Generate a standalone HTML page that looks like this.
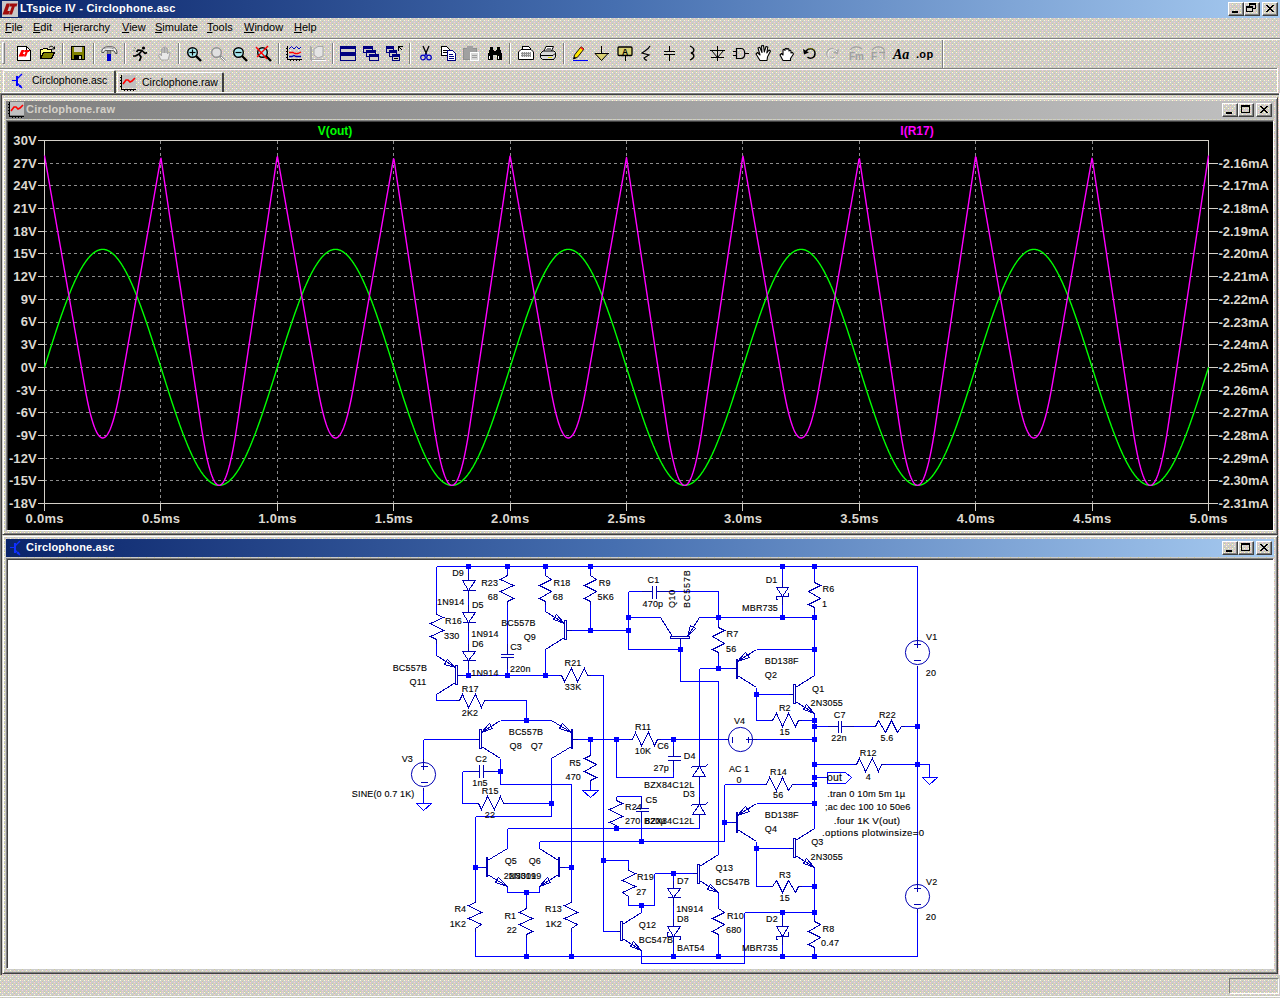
<!DOCTYPE html><html><head><meta charset="utf-8"><title>LTspice IV - Circlophone.asc</title><style>

html,body{margin:0;padding:0;}
body{width:1280px;height:998px;overflow:hidden;background:#d4d0c8;position:relative;
 font-family:"Liberation Sans",sans-serif;font-size:11px;color:#000;}
.abs{position:absolute;}
.t{position:absolute;white-space:nowrap;line-height:1;}
#title{left:0;top:0;width:1280px;height:18px;background:linear-gradient(to right,#0a246a 0%,#466fb0 48%,#a6caf0 100%);}
#title .cap{left:20px;top:3px;color:#fff;font-weight:bold;font-size:11px;letter-spacing:0.25px;}
.cbtn{position:absolute;width:16px;height:14px;background:transparent;box-sizing:border-box;
 border:1px solid;border-color:#fff #404040 #404040 #fff;box-shadow:inset -1px -1px 0 #808080;}
.menu{top:22px;font-size:11px;}
.menu u{text-decoration:underline;}
.hl{position:absolute;height:1px;left:0;width:1280px;}
.child{position:absolute;box-sizing:border-box;background:transparent;}
.ctitle{position:absolute;left:3px;top:3px;height:18px;}
.ctitle .cap{top:3px;font-weight:bold;font-size:11px;letter-spacing:0.2px;}
.tab{position:absolute;box-sizing:border-box;}
svg{position:absolute;overflow:visible;}
svg text{font-family:"Liberation Sans",sans-serif;}

</style></head><body>
<svg style="left:0;top:0" width="1280" height="998" shape-rendering="crispEdges"><defs><pattern id="dp" width="8" height="8" patternUnits="userSpaceOnUse"><rect width="8" height="8" fill="#cccccc"/><rect x="0" y="0" width="1" height="1" fill="#ffffcc"/><rect x="4" y="0" width="1" height="1" fill="#ffffcc"/><rect x="2" y="0" width="1" height="1" fill="#ffcccc"/><rect x="6" y="1" width="1" height="1" fill="#cccc99"/><rect x="2" y="2" width="1" height="1" fill="#ffffcc"/><rect x="6" y="2" width="1" height="1" fill="#ffcccc"/><rect x="0" y="3" width="1" height="1" fill="#cccc99"/><rect x="4" y="3" width="1" height="1" fill="#cccc99"/><rect x="0" y="4" width="1" height="1" fill="#ffffcc"/><rect x="4" y="4" width="1" height="1" fill="#ffffcc"/><rect x="6" y="4" width="1" height="1" fill="#ffcccc"/><rect x="2" y="5" width="1" height="1" fill="#cccc99"/><rect x="2" y="6" width="1" height="1" fill="#ffcccc"/><rect x="6" y="6" width="1" height="1" fill="#ffcccc"/><rect x="0" y="7" width="1" height="1" fill="#cccc99"/><rect x="4" y="7" width="1" height="1" fill="#cccc99"/></pattern></defs><rect width="1280" height="998" fill="url(#dp)"/></svg>
<div id="title" class="abs">
<svg class="abs" style="left:2px;top:1px" width="16" height="16" viewBox="0 0 16 16"><rect x="0" y="0" width="16" height="16" fill="#c8c8c8"/><path d="M0.5 13.5 L4.5 2.5 L8 2.5 L5.5 10 L8 10 L6.5 13.5 Z" fill="#a00c0c"/><path d="M8.2 2.5 L15.5 2.5 L14.5 5.5 L12.8 5.5 L10 13.5 L7 13.5 L9.8 5.5 L7.2 5.5 Z" fill="#a00c0c"/></svg>
<span class="t cap">LTspice IV - Circlophone.asc</span>
<svg style="left:0px;top:0px" width="1280" height="998" shape-rendering="crispEdges"><rect x="1228" y="2" width="16" height="14" fill="url(#dp)"/><rect x="1244" y="2" width="16" height="14" fill="url(#dp)"/><rect x="1262" y="2" width="16" height="14" fill="url(#dp)"/></svg>
<div class="cbtn" style="left:1228px;top:2px"><svg width="14" height="12" style="left:0;top:0" shape-rendering="crispEdges"><rect x="3" y="8" width="6" height="2" fill="#000"/></svg></div><div class="cbtn" style="left:1244px;top:2px"><svg width="14" height="12" style="left:0;top:0" shape-rendering="crispEdges"><rect x="4.5" y="0.5" width="6" height="5" fill="none" stroke="#000"/><rect x="4" y="0" width="7" height="2" fill="#000"/><rect x="1.5" y="3.5" width="6" height="5" fill="#d4d0c8" stroke="#000"/><rect x="1" y="3" width="7" height="2" fill="#000"/></svg></div><div class="cbtn" style="left:1262px;top:2px"><svg width="14" height="12" style="left:0;top:0" shape-rendering="crispEdges"><path d="M3 2 L10 9 M4 2 L11 9 M10 2 L3 9 M11 2 L4 9" stroke="#000" stroke-width="1" fill="none" shape-rendering="crispEdges"/></svg></div>
</div>
<span class="t menu" style="left:5px"><u>F</u>ile</span>
<span class="t menu" style="left:33px"><u>E</u>dit</span>
<span class="t menu" style="left:63px">H<u>i</u>erarchy</span>
<span class="t menu" style="left:122px"><u>V</u>iew</span>
<span class="t menu" style="left:155px"><u>S</u>imulate</span>
<span class="t menu" style="left:207px"><u>T</u>ools</span>
<span class="t menu" style="left:244px"><u>W</u>indow</span>
<span class="t menu" style="left:294px"><u>H</u>elp</span>
<div class="hl" style="top:38px;background:#808080"></div>
<div class="hl" style="top:39px;background:#fff"></div>
<div class="abs" style="left:2px;top:42px;width:3px;height:22px;box-sizing:border-box;border:1px solid;border-color:#fff #808080 #808080 #fff"></div>
<div class="hl" style="top:68px;background:#808080;width:1278px"></div>
<div class="hl" style="top:69px;background:#fff;width:1278px"></div>
<div class="abs" style="left:1277px;top:68px;width:1px;height:26px;background:#fff"></div>
<div class="hl" style="top:92px;background:#fff;width:1276px;left:2px"></div>
<div class="hl" style="top:93px;background:#808080;width:1280px;left:0"></div>
<div class="hl" style="top:94px;background:#404040;width:1278px;left:1px"></div>
<div class="tab" style="left:3px;top:70px;width:113px;height:23px;background:transparent;border-left:1px solid #fff;border-top:1px solid #fff;border-right:2px solid #404040;border-radius:2px 2px 0 0"></div>
<svg class="abs" style="left:11px;top:73px" width="16" height="16" viewBox="0 0 16 16" shape-rendering="crispEdges"><path d="M1 7.5 H5" stroke="#0000ff" fill="none"/><path d="M5.5 3 V13" stroke="#0000ff" stroke-width="2" fill="none"/><path d="M6 6 L11 1 M6 10 L11 15" stroke="#0000ff" fill="none" stroke-width="1.3" shape-rendering="auto"/><path d="M11 15 L7.5 13.8 L9.8 11.4 Z" fill="#0000ff" shape-rendering="auto"/></svg>
<span class="t" style="left:32px;top:75px;font-size:10.5px">Circlophone.asc</span>
<div class="tab" style="left:117px;top:72px;width:107px;height:20px;background:transparent;border-left:1px solid #fff;border-top:1px solid #fff;border-right:2px solid #404040;border-radius:2px 2px 0 0"></div>
<svg class="abs" style="left:120px;top:75px" width="16" height="16" viewBox="0 0 16 16" shape-rendering="crispEdges"><rect x="2" y="0" width="14" height="13" fill="#c0c0c0"/><path d="M1.5 0 V14.5 H16" stroke="#000" fill="none"/><path d="M0 2.5 H2 M0 5.5 H2 M0 8.5 H2 M0 11.5 H2 M4.5 14 V16 M7.5 14 V16 M10.5 14 V16 M13.5 14 V16" stroke="#000" fill="none"/><path d="M3 9 L6 5 L8 5 L10 7 L12 6 L15 3" stroke="#ff0000" stroke-width="1.6" fill="none" shape-rendering="auto"/></svg>
<span class="t" style="left:142px;top:77px;font-size:10.5px">Circlophone.raw</span>
<div class="child" style="left:2px;top:97px;width:1276px;height:438px;border:1px solid;border-color:#d4d0c8 #404040 #404040 #d4d0c8;box-shadow:inset 1px 1px 0 #fff, inset -1px -1px 0 #808080">
<div class="ctitle" style="width:1268px;background:linear-gradient(to right,#808080,#c0c0c0)">
<svg class="abs" style="left:2px;top:1px" width="16" height="16" viewBox="0 0 16 16" shape-rendering="crispEdges"><rect x="2" y="0" width="14" height="13" fill="#c0c0c0"/><path d="M1.5 0 V14.5 H16" stroke="#000" fill="none"/><path d="M0 2.5 H2 M0 5.5 H2 M0 8.5 H2 M0 11.5 H2 M4.5 14 V16 M7.5 14 V16 M10.5 14 V16 M13.5 14 V16" stroke="#000" fill="none"/><path d="M3 9 L6 5 L8 5 L10 7 L12 6 L15 3" stroke="#ff0000" stroke-width="1.6" fill="none" shape-rendering="auto"/></svg>
<span class="t cap" style="left:20px;color:#d4d0c8">Circlophone.raw</span>
<svg style="left:-6px;top:-101px" width="1280" height="998" shape-rendering="crispEdges"><rect x="1222" y="103" width="16" height="14" fill="url(#dp)"/><rect x="1238" y="103" width="16" height="14" fill="url(#dp)"/><rect x="1256" y="103" width="16" height="14" fill="url(#dp)"/></svg>
<div class="cbtn" style="left:1216px;top:2px"><svg width="14" height="12" style="left:0;top:0" shape-rendering="crispEdges"><rect x="3" y="8" width="6" height="2" fill="#000"/></svg></div><div class="cbtn" style="left:1232px;top:2px"><svg width="14" height="12" style="left:0;top:0" shape-rendering="crispEdges"><rect x="2.5" y="1.5" width="8" height="7" fill="none" stroke="#000"/><rect x="2" y="1" width="9" height="2" fill="#000"/></svg></div><div class="cbtn" style="left:1250px;top:2px"><svg width="14" height="12" style="left:0;top:0" shape-rendering="crispEdges"><path d="M3 2 L10 9 M4 2 L11 9 M10 2 L3 9 M11 2 L4 9" stroke="#000" stroke-width="1" fill="none" shape-rendering="crispEdges"/></svg></div>
</div>
</div>
<div class="child" style="left:2px;top:535px;width:1276px;height:439px;border:1px solid;border-color:#d4d0c8 #404040 #404040 #d4d0c8;box-shadow:inset 1px 1px 0 #fff, inset -1px -1px 0 #808080">
<div class="ctitle" style="width:1268px;background:linear-gradient(to right,#0a246a 0%,#466fb0 48%,#a6caf0 100%)">
<svg class="abs" style="left:3px;top:1px" width="16" height="16" viewBox="0 0 16 16" shape-rendering="crispEdges"><path d="M1 7.5 H5" stroke="#1030ff" fill="none"/><path d="M5.5 3 V13" stroke="#1030ff" stroke-width="2" fill="none"/><path d="M6 6 L11 1 M6 10 L11 15" stroke="#1030ff" fill="none" stroke-width="1.3" shape-rendering="auto"/><path d="M11 15 L7.5 13.8 L9.8 11.4 Z" fill="#1030ff" shape-rendering="auto"/></svg>
<span class="t cap" style="left:20px;color:#fff">Circlophone.asc</span>
<svg style="left:-6px;top:-539px" width="1280" height="998" shape-rendering="crispEdges"><rect x="1222" y="541" width="16" height="14" fill="url(#dp)"/><rect x="1238" y="541" width="16" height="14" fill="url(#dp)"/><rect x="1256" y="541" width="16" height="14" fill="url(#dp)"/></svg>
<div class="cbtn" style="left:1216px;top:2px"><svg width="14" height="12" style="left:0;top:0" shape-rendering="crispEdges"><rect x="3" y="8" width="6" height="2" fill="#000"/></svg></div><div class="cbtn" style="left:1232px;top:2px"><svg width="14" height="12" style="left:0;top:0" shape-rendering="crispEdges"><rect x="2.5" y="1.5" width="8" height="7" fill="none" stroke="#000"/><rect x="2" y="1" width="9" height="2" fill="#000"/></svg></div><div class="cbtn" style="left:1250px;top:2px"><svg width="14" height="12" style="left:0;top:0" shape-rendering="crispEdges"><path d="M3 2 L10 9 M4 2 L11 9 M10 2 L3 9 M11 2 L4 9" stroke="#000" stroke-width="1" fill="none" shape-rendering="crispEdges"/></svg></div>
</div>
</div>
<div class="abs" style="left:0;top:93px;width:1px;height:882px;background:#808080"></div>
<div class="abs" style="left:1px;top:94px;width:1px;height:881px;background:#404040"></div>
<div class="abs" style="left:1279px;top:93px;width:1px;height:882px;background:#fff"></div>
<div class="hl" style="top:996px;background:#fff"></div>
<div class="abs" style="left:1229px;top:978px;width:50px;height:16px;box-sizing:border-box;border:1px solid;border-color:#808080 #fff #fff #808080"></div>
<svg style="left:0;top:0" width="1280" height="70" viewBox="0 0 1280 70">
<g transform="translate(17 46)" shape-rendering="crispEdges"><path d="M.5 .5 H9.5 L13.5 4.5 V14.5 H.5 Z" fill="#fff" stroke="#000"/><path d="M9.5 .5 V4.5 H13.5" fill="none" stroke="#000"/><path d="M1.5 10.5 L4.5 4 H7.5 L5.8 8 H7.5 L6.5 10.5 Z M7.8 4 H12.8 L12 6 H10.8 L9 10.5 H6.8 L8.6 6 H7 Z" fill="#ff0000" shape-rendering="auto"/></g>
<g transform="translate(40 46)" shape-rendering="crispEdges"><path d="M.5 12.5 V3.5 H2.5 L3.5 2.5 H7 L8 3.5 H11.5 V6" fill="#ffff80" stroke="#000"/><path d="M.5 12.5 L3.5 6.5 H14.5 L11.5 12.5 Z" fill="#808000" stroke="#000"/><path d="M9 1.5 C11 -.5 13 0 14 2.5 M14.5 .5 V3 H12" fill="none" stroke="#000" shape-rendering="auto"/></g>
<rect x="62" y="43" width="1" height="21" fill="#808080"/><rect x="63" y="43" width="1" height="21" fill="#ffffff"/>
<g transform="translate(71 46)" shape-rendering="crispEdges"><rect x=".5" y=".5" width="13" height="13" fill="#808000" stroke="#000"/><rect x="3" y="1" width="8" height="5" fill="#d4d0c8"/><rect x="3" y="9" width="8" height="5" fill="#000"/><rect x="8" y="10" width="2" height="3" fill="#d4d0c8"/></g>
<rect x="93" y="43" width="1" height="21" fill="#808080"/><rect x="94" y="43" width="1" height="21" fill="#ffffff"/>
<g transform="translate(101 46)"><path d="M.8 6.5 C.5 3 3 .8 7 .8 H10 C14 .8 16 3.5 16 7.5 L14.5 7.5 C14 5 12.5 4.3 10.5 4.6 H6 C4.5 3.8 3 4.5 3 6.5 Z" fill="#f0f0f0" stroke="#404040" stroke-width=".9"/><path d="M3 2.5 C5 1.5 10 1.5 13 3" stroke="#a0a0a0" fill="none"/><rect x="6.2" y="4.8" width="3.6" height="3.4" fill="#909090" stroke="#404040" stroke-width=".6"/><rect x="6" y="8" width="4" height="7" fill="#0000d0"/></g>
<rect x="124" y="43" width="1" height="21" fill="#808080"/><rect x="125" y="43" width="1" height="21" fill="#ffffff"/>
<g transform="translate(132 46)"><circle cx="11.5" cy="2" r="1.6" fill="#000"/><path d="M10.5 4 L7 8 L9 11 L7.5 15 M7 8 L3.5 10 L1 10 M10 4.5 L6 4 L4.5 6 M10.5 5 L13 7.5 L15 6.5" stroke="#000" stroke-width="1.7" fill="none" stroke-linejoin="round"/><path d="M2 1 L4 3 M1 4 L3 5" stroke="#808080" stroke-width=".8"/></g>
<g transform="translate(157 46)"><path d="M4 14 L1.5 9 L3 8 L4.5 10 V3 H6 V7 V1.5 H7.5 V7 V1 H9 V7 V2.5 H10.5 V8 L12 6 L13 7 L11 14 Z" fill="#e8e8e8" stroke="#a0a0a0" stroke-width=".9"/></g>
<rect x="178" y="43" width="1" height="21" fill="#808080"/><rect x="179" y="43" width="1" height="21" fill="#ffffff"/>
<g transform="translate(186 46)"><circle cx="6.5" cy="6.5" r="4.8" fill="#a8e8f0" stroke="#000" stroke-width="1.4"/><path d="M10 10 L15 15" stroke="#000" stroke-width="2.4" fill="none"/><path d="M3.5 6.5 H9.5" stroke="#000" stroke-width="1.2"/><path d="M6.5 3.5 V9.5" stroke="#000" stroke-width="1.2"/></g>
<g transform="translate(210 46)"><circle cx="6.5" cy="6.5" r="4.8" fill="#e0e0e0" stroke="#909090" stroke-width="1.4"/><path d="M10 10 L15 15" stroke="#909090" stroke-width="2.4" fill="none"/><path d="M11 11 L16 16" stroke="#fff" stroke-width="1" fill="none"/></g>
<g transform="translate(232 46)"><circle cx="6.5" cy="6.5" r="4.8" fill="#a8e8f0" stroke="#000" stroke-width="1.4"/><path d="M10 10 L15 15" stroke="#000" stroke-width="2.4" fill="none"/><path d="M3.5 6.5 H9.5" stroke="#000" stroke-width="1.2"/></g>
<g transform="translate(256 46)"><circle cx="6.5" cy="6.5" r="4.8" fill="#a8e8f0" stroke="#000" stroke-width="1.4"/><path d="M10 10 L15 15" stroke="#000" stroke-width="2.4" fill="none"/><path d="M0 1 L11 13 M12 0 L1 11" stroke="#ff0000" stroke-width="1.4"/></g>
<rect x="278" y="43" width="1" height="21" fill="#808080"/><rect x="279" y="43" width="1" height="21" fill="#ffffff"/>
<g transform="translate(286 46)" shape-rendering="crispEdges"><path d="M1.5 0 V13.5 H16" stroke="#000" fill="none"/><path d="M0 2.5 H2 M0 5.5 H2 M0 8.5 H2 M0 11.5 H2 M4.5 13 V15 M7.5 13 V15 M10.5 13 V15 M13.5 13 V15" stroke="#000" fill="none"/><path d="M3 3 L5.5 .5 L8 3 L10.5 .5 L13 3 L15 1" stroke="#0000c0" fill="none" shape-rendering="auto"/><path d="M3 6.5 H7 L9 7.5 H12 L15 6" stroke="#ff0000" stroke-width="1.3" fill="none" shape-rendering="auto"/><path d="M3 10.5 H6 L8 9.5 L10 10.5 H15" stroke="#0000c0" stroke-width="1.3" fill="none" shape-rendering="auto"/></g>
<g transform="translate(309 46)" shape-rendering="crispEdges"><path d="M1.5 0 V13.5 H16 M2.5 1 V14.5 H17" stroke="#a8a8a8" fill="none"/><path d="M2.5 14.5 H17" stroke="#fff" fill="none"/><path d="M5 3 L9 .5 H14 V10 L9 12 L5 9 Z" stroke="#a8a8a8" fill="#e4e4e4" shape-rendering="auto"/></g>
<rect x="332" y="43" width="1" height="21" fill="#808080"/><rect x="333" y="43" width="1" height="21" fill="#ffffff"/>
<g transform="translate(340 46)" shape-rendering="crispEdges"><rect x="0.5" y="0.5" width="15" height="6" fill="#d4d0c8" stroke="#000080"/><rect x="0" y="0" width="16" height="3" fill="#000080"/><rect x="0.5" y="7.5" width="15" height="7" fill="#d4d0c8" stroke="#000080"/><rect x="0" y="7" width="16" height="3" fill="#000080"/></g>
<g transform="translate(363 46)" shape-rendering="crispEdges"><rect x="0.5" y="0.5" width="9" height="6" fill="#d4d0c8" stroke="#000080"/><rect x="0" y="0" width="10" height="3" fill="#000080"/><rect x="3.5" y="4.5" width="9" height="6" fill="#d4d0c8" stroke="#000080"/><rect x="3" y="4" width="10" height="3" fill="#000080"/><rect x="6.5" y="8.5" width="9" height="6" fill="#d4d0c8" stroke="#000080"/><rect x="6" y="8" width="10" height="3" fill="#000080"/></g>
<g transform="translate(386 46)" shape-rendering="crispEdges"><rect x="0.5" y="0.5" width="7" height="6" fill="#d4d0c8" stroke="#000080"/><rect x="0" y="0" width="8" height="3" fill="#000080"/><rect x="3.5" y="4.5" width="7" height="6" fill="#d4d0c8" stroke="#000080"/><rect x="3" y="4" width="8" height="3" fill="#000080"/><rect x="6.5" y="8.5" width="7" height="6" fill="#d4d0c8" stroke="#000080"/><rect x="6" y="8" width="8" height="3" fill="#000080"/><rect x="8" y="12" width="4" height="1" fill="#000"/><path d="M12.5 4.5 V.5 H16.5 M12.5 .5 L16 4" stroke="#000" fill="none"/></g>
<rect x="409" y="43" width="1" height="21" fill="#808080"/><rect x="410" y="43" width="1" height="21" fill="#ffffff"/>
<g transform="translate(419 46)"><path d="M4 0 L7.5 8 M10 0 L6.5 8" stroke="#000" stroke-width="1.3" fill="none"/><circle cx="4" cy="11.5" r="2.3" fill="none" stroke="#0000c0" stroke-width="1.2"/><circle cx="10" cy="11.5" r="2.3" fill="none" stroke="#0000c0" stroke-width="1.2"/><path d="M7.5 8 L5.2 9.8 M6.5 8 L8.8 9.8" stroke="#0000c0" stroke-width="1.2"/></g>
<g transform="translate(441 46)" shape-rendering="crispEdges"><path d="M.5 .5 H5.5 L8.5 3.5 V9.5 H.5 Z" fill="#fff" stroke="#000"/><path d="M2 4.5 H6 M2 6.5 H6" stroke="#000"/><path d="M6.5 4.5 H11.5 L14.5 7.5 V14.5 H6.5 Z" fill="#fff" stroke="#000080"/><path d="M8 8.5 H12 M8 10.5 H13 M8 12.5 H13" stroke="#000080"/></g>
<g transform="translate(463 46)" shape-rendering="crispEdges"><rect x=".5" y="2.5" width="13" height="11" fill="#a0a0a0" stroke="#909090"/><rect x="4" y="0" width="6" height="3" fill="#a0a0a0"/><rect x="7.5" y="6.5" width="8" height="8" fill="#d8d8d8" stroke="#fff"/><path d="M9 9.5 H14 M9 11.5 H14" stroke="#a0a0a0"/></g>
<g transform="translate(487 46)" shape-rendering="crispEdges"><path d="M1 14 V8 L3 3 V1 H6 V3 L7 5 H9 L10 3 V1 H13 V3 L15 8 V14 H10 V9 H6 V14 Z" fill="#000"/><rect x="2" y="10" width="1" height="3" fill="#fff"/><rect x="11" y="10" width="1" height="3" fill="#fff"/></g>
<rect x="509" y="43" width="1" height="21" fill="#808080"/><rect x="510" y="43" width="1" height="21" fill="#ffffff"/>
<g transform="translate(518 46)" shape-rendering="crispEdges"><path d="M4.5 4 V.5 H10.5 L12.5 2.5 V4" fill="#fff" stroke="#000"/><path d="M.5 13.5 V6 L3 3.5 H13 L15.5 6 V13.5 Z" fill="#fff" stroke="#000" shape-rendering="auto"/><rect x="3" y="6" width="10" height="5" fill="#909090"/><path d="M3 6.5 H13 M3 8.5 H13 M3 10.5 H13" stroke="#e0e0e0" stroke-dasharray="1 1"/></g>
<g transform="translate(540 46)" shape-rendering="crispEdges"><path d="M4 5 L6 .5 H13.5 L11.5 5" fill="#fff" stroke="#000" shape-rendering="auto"/><path d="M6.5 2.5 H11 M6 3.5 H10.5" stroke="#808080"/><path d="M.5 11.5 V7.5 L3 5 H14 L15.5 6.5 V11 L13.5 13.5 H2.5 Z" fill="#d8d8d8" stroke="#000" shape-rendering="auto"/><path d="M1 9.5 H13 L15 7.5" stroke="#000" fill="none" shape-rendering="auto"/><rect x="8" y="10.5" width="4" height="1.5" fill="#e0e000"/><path d="M2.5 13.5 H13.5" stroke="#000"/></g>
<rect x="563" y="43" width="1" height="21" fill="#808080"/><rect x="564" y="43" width="1" height="21" fill="#ffffff"/>
<g transform="translate(572 46)" shape-rendering="crispEdges"><path d="M1 14.5 H16" stroke="#0000ff" stroke-width="1.3"/><path d="M1.5 13 L2.5 9 L9 .8 L12 3 L5.5 11.2 Z" fill="#ffe800" stroke="#000" stroke-width=".9" shape-rendering="auto"/><path d="M8.2 2 L11 4.3 L12 3 L9 .8 Z" fill="#ff2020" shape-rendering="auto"/><path d="M1.5 13 L2.3 10.5 L4.2 12 Z" fill="#000" shape-rendering="auto"/></g>
<g transform="translate(594 46)" shape-rendering="crispEdges"><path d="M7.5 0 V7.5 M.5 7.5 H14.5" stroke="#000" fill="none"/><path d="M1 7.5 H14 L7.5 14.5 Z" fill="#d8d070" stroke="#000" shape-rendering="auto"/></g>
<g transform="translate(617 46)" shape-rendering="crispEdges"><rect x="1" y="1" width="14" height="8.5" rx="1" fill="#d8d070" stroke="#000" stroke-width="1.3" shape-rendering="auto"/><path d="M8 10 V15" stroke="#000"/><text x="8" y="8.6" font-size="8.5px" font-weight="bold" text-anchor="middle" fill="#000">A</text></g>
<g transform="translate(640 46)"><path d="M10 0 C9 2 8 3 5 5 L2 7 L9 9 L4 12 C5 14 6 14.5 7 14" stroke="#000" stroke-width="1.2" fill="none"/></g>
<g transform="translate(663 46)" shape-rendering="crispEdges"><path d="M6.5 0 V6 M6.5 9 V15" stroke="#000" stroke-width="1"/><path d="M1 5.5 H12 M1 8.5 H12" stroke="#000" stroke-width="1"/></g>
<g transform="translate(687 46)"><path d="M3 0 C8 2 8 6 4 7 C8 8 8 12 3 14" stroke="#000" stroke-width="1.3" fill="none"/></g>
<g transform="translate(710 46)" shape-rendering="crispEdges"><path d="M7.5 0 V15 M0 4.5 H15 M1 11.5 H14" stroke="#000" fill="none"/><path d="M1.5 4.5 H13.5 L7.5 11.5 Z" stroke="#000" fill="none" shape-rendering="auto"/></g>
<g transform="translate(733 46)" shape-rendering="crispEdges"><path d="M3.5 2.5 H8 C13 2.5 13 12.5 8 12.5 H3.5 Z" fill="none" stroke="#000" stroke-width="1.2" shape-rendering="auto"/><path d="M0 5.5 H3 M0 9.5 H3 M12 7.5 H16" stroke="#000"/></g>
<g transform="translate(755 45)"><path d="M5 15.5 L1 9 L2.5 7.5 L5 10 L3 3 L4.8 2.3 L7 7.5 L6.5 .8 L8.5 .6 L9.3 7 L11 1.5 L12.8 2 L11.8 8 L14 5 L15.5 6 L12.5 12 L12 15.5 Z" fill="#fff" stroke="#000" stroke-width="1.1" stroke-linejoin="round"/></g>
<g transform="translate(779 47)"><path d="M4 13.5 L1 8 L2.5 6.5 L4 8 V3.5 C4 2 6 2 6 3.5 V2.5 C6 1 8 1 8 2.5 V2.5 C8 1.2 10 1.2 10 3 V4 C10.5 2.8 12 3 12 4.5 V6 L13.5 5.5 L14.5 7 L11.5 11.5 V13.5 Z" fill="#fff" stroke="#000" stroke-width="1.1" stroke-linejoin="round"/></g>
<g transform="translate(802 46)"><path d="M4 5 C7 1 13 2.5 13 7.5 C13 12 8 13.5 5.5 11" fill="none" stroke="#000" stroke-width="1.5"/><path d="M1 3 L2 8.5 L7 6.5 Z" fill="#000"/><path d="M6 3 C9 1.5 12 3 12.5 5" fill="none" stroke="#808000" stroke-width=".8"/></g>
<g transform="translate(825 46)"><path d="M11 5 C8 1 2 2.5 2 7.5 C2 12 7 13.5 9.5 11" fill="none" stroke="#a8a8a8" stroke-width="1.5"/><path d="M14 3 L13 8.5 L8 6.5 Z" fill="#a8a8a8"/><path d="M12 6 C9 2 3 3.5 3 8.5 C3 13 8 14.5 10.5 12" fill="none" stroke="#fff" stroke-width=".8"/></g>
<g font-weight="bold" font-size="10px" fill="#a0a0a0"><text x="849" y="60">Fm</text><text x="871" y="60">F</text></g>
<path d="M850 50 C853 46 859 46 862 49 M872 50 C875 46 881 46 884 49 V59" fill="none" stroke="#a0a0a0" stroke-width="1.1"/>
<path d="M879 52.5 H885" stroke="#a0a0a0" stroke-width="1.2"/>
<text x="893" y="59" style="font-family:'Liberation Serif',serif;font-style:italic;font-weight:bold;font-size:14px" fill="#000">Aa</text>
<text x="916" y="57.5" font-weight="bold" font-size="11px" fill="#000" letter-spacing="0.3">.op</text>
<rect x="942" y="40" width="1" height="28" fill="#808080"/><rect x="943" y="40" width="1" height="28" fill="#ffffff"/>
</svg>
<div class="abs" style="left:6px;top:120px;width:1268px;height:411px;box-sizing:border-box;background:#000;border:1px solid;border-color:#808080 #fff #fff #808080;box-shadow:inset 1px 1px 0 #404040"></div>
<svg style="left:0;top:0" width="1280" height="540" viewBox="0 0 1280 540">
<path d="M44.0 163.5 H1208.5 M44.0 185.5 H1208.5 M44.0 208.5 H1208.5 M44.0 231.5 H1208.5 M44.0 253.5 H1208.5 M44.0 276.5 H1208.5 M44.0 299.5 H1208.5 M44.0 322.5 H1208.5 M44.0 344.5 H1208.5 M44.0 367.5 H1208.5 M44.0 390.5 H1208.5 M44.0 412.5 H1208.5 M44.0 435.5 H1208.5 M44.0 458.5 H1208.5 M44.0 480.5 H1208.5 M160.5 141.0 V503.5 M277.5 141.0 V503.5 M393.5 141.0 V503.5 M510.5 141.0 V503.5 M626.5 141.0 V503.5 M742.5 141.0 V503.5 M859.5 141.0 V503.5 M975.5 141.0 V503.5 M1092.5 141.0 V503.5" stroke="#8c8c8c" stroke-width="1" stroke-dasharray="3 3" fill="none" shape-rendering="crispEdges"/>
<path d="M44.5 140.5 H1208.5 V510.5 M44.5 140.5 V510.5 M37.5 503.5 H1217.5 M37.5 140.5 H44.5 M37.5 163.5 H44.5 M1208.5 163.5 H1217.5 M37.5 185.5 H44.5 M1208.5 185.5 H1217.5 M37.5 208.5 H44.5 M1208.5 208.5 H1217.5 M37.5 231.5 H44.5 M1208.5 231.5 H1217.5 M37.5 253.5 H44.5 M1208.5 253.5 H1217.5 M37.5 276.5 H44.5 M1208.5 276.5 H1217.5 M37.5 299.5 H44.5 M1208.5 299.5 H1217.5 M37.5 322.5 H44.5 M1208.5 322.5 H1217.5 M37.5 344.5 H44.5 M1208.5 344.5 H1217.5 M37.5 367.5 H44.5 M1208.5 367.5 H1217.5 M37.5 390.5 H44.5 M1208.5 390.5 H1217.5 M37.5 412.5 H44.5 M1208.5 412.5 H1217.5 M37.5 435.5 H44.5 M1208.5 435.5 H1217.5 M37.5 458.5 H44.5 M1208.5 458.5 H1217.5 M37.5 480.5 H44.5 M1208.5 480.5 H1217.5 M160.5 503.5 V510.5 M277.5 503.5 V510.5 M393.5 503.5 V510.5 M510.5 503.5 V510.5 M626.5 503.5 V510.5 M742.5 503.5 V510.5 M859.5 503.5 V510.5 M975.5 503.5 V510.5 M1092.5 503.5 V510.5" stroke="#d4d0c8" stroke-width="1" fill="none" shape-rendering="crispEdges"/>
<path d="M44.5 367.4 L45.0 365.8 L45.5 364.2 L46.0 362.6 L46.5 361.0 L47.0 359.4 L47.5 357.8 L48.0 356.2 L48.5 354.7 L49.0 353.1 L49.5 351.5 L50.0 349.9 L50.5 348.3 L51.0 346.8 L51.5 345.2 L52.0 343.7 L52.5 342.1 L53.0 340.5 L53.5 339.0 L54.0 337.5 L54.5 335.9 L55.0 334.4 L55.5 332.9 L56.0 331.3 L56.5 329.8 L57.0 328.3 L57.5 326.8 L58.0 325.3 L58.5 323.8 L59.0 322.4 L59.5 320.9 L60.0 319.4 L60.5 318.0 L61.0 316.5 L61.5 315.1 L62.0 313.7 L62.5 312.3 L63.0 310.9 L63.5 309.5 L64.0 308.1 L64.5 306.7 L65.0 305.4 L65.5 304.0 L66.0 302.7 L66.5 301.4 L67.0 300.0 L67.5 298.7 L68.0 297.5 L68.5 296.2 L69.0 294.9 L69.5 293.7 L70.0 292.4 L70.5 291.2 L71.0 290.0 L71.5 288.8 L72.0 287.6 L72.5 286.4 L73.0 285.3 L73.5 284.2 L74.0 283.0 L74.5 281.9 L75.0 280.8 L75.5 279.8 L76.0 278.7 L76.5 277.7 L77.0 276.6 L77.5 275.6 L78.0 274.6 L78.5 273.7 L79.0 272.7 L79.5 271.8 L80.0 270.8 L80.5 269.9 L81.0 269.0 L81.5 268.2 L82.0 267.3 L82.5 266.5 L83.0 265.7 L83.5 264.9 L84.0 264.1 L84.5 263.3 L85.0 262.6 L85.5 261.9 L86.0 261.2 L86.5 260.5 L87.0 259.8 L87.5 259.2 L88.0 258.5 L88.5 257.9 L89.0 257.4 L89.5 256.8 L90.0 256.2 L90.5 255.7 L91.0 255.2 L91.5 254.7 L92.0 254.3 L92.5 253.8 L93.0 253.4 L93.5 253.0 L94.0 252.6 L94.5 252.3 L95.0 251.9 L95.5 251.6 L96.0 251.3 L96.5 251.0 L97.0 250.8 L97.5 250.5 L98.0 250.3 L98.5 250.1 L99.0 250.0 L99.5 249.8 L100.0 249.7 L100.5 249.6 L101.0 249.5 L101.5 249.4 L102.0 249.4 L102.5 249.4 L103.0 249.4 L103.5 249.4 L104.0 249.4 L104.5 249.5 L105.0 249.6 L105.5 249.7 L106.0 249.8 L106.5 250.0 L107.0 250.2 L107.5 250.4 L108.0 250.6 L108.5 250.8 L109.0 251.1 L109.5 251.4 L110.0 251.7 L110.5 252.0 L111.0 252.3 L111.5 252.7 L112.0 253.1 L112.5 253.5 L113.0 253.9 L113.5 254.4 L114.0 254.8 L114.5 255.3 L115.0 255.8 L115.5 256.3 L116.0 256.9 L116.5 257.5 L117.0 258.1 L117.5 258.7 L118.0 259.3 L118.5 259.9 L119.0 260.6 L119.5 261.3 L120.0 262.0 L120.5 262.7 L121.0 263.5 L121.5 264.2 L122.0 265.0 L122.5 265.8 L123.0 266.6 L123.5 267.5 L124.0 268.3 L124.5 269.2 L125.0 270.1 L125.5 271.0 L126.0 271.9 L126.5 272.9 L127.0 273.9 L127.5 274.8 L128.0 275.8 L128.5 276.8 L129.0 277.9 L129.5 278.9 L130.0 280.0 L130.5 281.1 L131.0 282.2 L131.5 283.3 L132.0 284.4 L132.5 285.5 L133.0 286.7 L133.5 287.9 L134.0 289.0 L134.5 290.2 L135.0 291.4 L135.5 292.7 L136.0 293.9 L136.5 295.2 L137.0 296.4 L137.5 297.7 L138.0 299.0 L138.5 300.3 L139.0 301.6 L139.5 302.9 L140.0 304.3 L140.5 305.6 L141.0 307.0 L141.5 308.4 L142.0 309.8 L142.5 311.2 L143.0 312.6 L143.5 314.0 L144.0 315.4 L144.5 316.8 L145.0 318.3 L145.5 319.7 L146.0 321.2 L146.5 322.7 L147.0 324.1 L147.5 325.6 L148.0 327.1 L148.5 328.6 L149.0 330.1 L149.5 331.6 L150.0 333.2 L150.5 334.7 L151.0 336.2 L151.5 337.8 L152.0 339.3 L152.5 340.9 L153.0 342.4 L153.5 344.0 L154.0 345.5 L154.5 347.1 L155.0 348.7 L155.5 350.2 L156.0 351.8 L156.5 353.4 L157.0 355.0 L157.5 356.6 L158.0 358.1 L158.5 359.7 L159.0 361.3 L159.5 362.9 L160.0 364.5 L160.5 366.1 L161.0 367.7 L161.5 369.3 L162.0 370.9 L162.5 372.5 L163.0 374.1 L163.5 375.6 L164.0 377.2 L164.5 378.8 L165.0 380.4 L165.5 382.0 L166.0 383.6 L166.5 385.1 L167.0 386.7 L167.5 388.3 L168.0 389.8 L168.5 391.4 L169.0 393.0 L169.5 394.5 L170.0 396.1 L170.5 397.6 L171.0 399.1 L171.5 400.7 L172.0 402.2 L172.5 403.7 L173.0 405.2 L173.5 406.7 L174.0 408.2 L174.5 409.7 L175.0 411.2 L175.5 412.7 L176.0 414.1 L176.5 415.6 L177.0 417.1 L177.5 418.5 L178.0 419.9 L178.5 421.3 L179.0 422.8 L179.5 424.2 L180.0 425.5 L180.5 426.9 L181.0 428.3 L181.5 429.7 L182.0 431.0 L182.5 432.3 L183.0 433.7 L183.5 435.0 L184.0 436.3 L184.5 437.6 L185.0 438.8 L185.5 440.1 L186.0 441.3 L186.5 442.6 L187.0 443.8 L187.5 445.0 L188.0 446.2 L188.5 447.4 L189.0 448.5 L189.5 449.7 L190.0 450.8 L190.5 451.9 L191.0 453.0 L191.5 454.1 L192.0 455.2 L192.5 456.2 L193.0 457.3 L193.5 458.3 L194.0 459.3 L194.5 460.3 L195.0 461.3 L195.5 462.2 L196.0 463.2 L196.5 464.1 L197.0 465.0 L197.5 465.9 L198.0 466.8 L198.5 467.6 L199.0 468.4 L199.5 469.2 L200.0 470.0 L200.5 470.8 L201.0 471.6 L201.5 472.3 L202.0 473.0 L202.5 473.7 L203.0 474.4 L203.5 475.1 L204.0 475.7 L204.5 476.3 L205.0 476.9 L205.5 477.5 L206.0 478.1 L206.5 478.6 L207.0 479.1 L207.5 479.6 L208.0 480.1 L208.5 480.6 L209.0 481.0 L209.5 481.4 L210.0 481.8 L210.5 482.2 L211.0 482.6 L211.5 482.9 L212.0 483.2 L212.5 483.5 L213.0 483.8 L213.5 484.0 L214.0 484.3 L214.5 484.5 L215.0 484.7 L215.5 484.8 L216.0 485.0 L216.5 485.1 L217.0 485.2 L217.5 485.3 L218.0 485.3 L218.5 485.4 L219.0 485.4 L219.5 485.4 L220.0 485.3 L220.5 485.3 L221.0 485.2 L221.5 485.1 L222.0 485.0 L222.5 484.9 L223.0 484.7 L223.5 484.5 L224.0 484.3 L224.5 484.1 L225.0 483.9 L225.5 483.6 L226.0 483.3 L226.5 483.0 L227.0 482.7 L227.5 482.4 L228.0 482.0 L228.5 481.6 L229.0 481.2 L229.5 480.8 L230.0 480.3 L230.5 479.8 L231.0 479.3 L231.5 478.8 L232.0 478.3 L232.5 477.7 L233.0 477.2 L233.5 476.6 L234.0 476.0 L234.5 475.3 L235.0 474.7 L235.5 474.0 L236.0 473.3 L236.5 472.6 L237.0 471.9 L237.5 471.1 L238.0 470.4 L238.5 469.6 L239.0 468.8 L239.5 467.9 L240.0 467.1 L240.5 466.2 L241.0 465.4 L241.5 464.5 L242.0 463.5 L242.5 462.6 L243.0 461.7 L243.5 460.7 L244.0 459.7 L244.5 458.7 L245.0 457.7 L245.5 456.7 L246.0 455.6 L246.5 454.6 L247.0 453.5 L247.5 452.4 L248.0 451.3 L248.5 450.1 L249.0 449.0 L249.5 447.8 L250.0 446.7 L250.5 445.5 L251.0 444.3 L251.5 443.1 L252.0 441.8 L252.5 440.6 L253.0 439.3 L253.5 438.1 L254.0 436.8 L254.5 435.5 L255.0 434.2 L255.5 432.9 L256.0 431.5 L256.5 430.2 L257.0 428.8 L257.5 427.5 L258.0 426.1 L258.5 424.7 L259.0 423.3 L259.5 421.9 L260.0 420.5 L260.5 419.1 L261.0 417.6 L261.5 416.2 L262.0 414.7 L262.5 413.3 L263.0 411.8 L263.5 410.3 L264.0 408.8 L264.5 407.3 L265.0 405.8 L265.5 404.3 L266.0 402.8 L266.5 401.3 L267.0 399.8 L267.5 398.2 L268.0 396.7 L268.5 395.1 L269.0 393.6 L269.5 392.0 L270.0 390.5 L270.5 388.9 L271.0 387.3 L271.5 385.8 L272.0 384.2 L272.5 382.6 L273.0 381.0 L273.5 379.5 L274.0 377.9 L274.5 376.3 L275.0 374.7 L275.5 373.1 L276.0 371.5 L276.5 369.9 L277.0 368.3 L277.5 366.7 L278.0 365.1 L278.5 363.6 L279.0 362.0 L279.5 360.4 L280.0 358.8 L280.5 357.2 L281.0 355.6 L281.5 354.0 L282.0 352.4 L282.5 350.9 L283.0 349.3 L283.5 347.7 L284.0 346.2 L284.5 344.6 L285.0 343.0 L285.5 341.5 L286.0 339.9 L286.5 338.4 L287.0 336.8 L287.5 335.3 L288.0 333.8 L288.5 332.2 L289.0 330.7 L289.5 329.2 L290.0 327.7 L290.5 326.2 L291.0 324.7 L291.5 323.3 L292.0 321.8 L292.5 320.3 L293.0 318.9 L293.5 317.4 L294.0 316.0 L294.5 314.5 L295.0 313.1 L295.5 311.7 L296.0 310.3 L296.5 308.9 L297.0 307.5 L297.5 306.2 L298.0 304.8 L298.5 303.5 L299.0 302.1 L299.5 300.8 L300.0 299.5 L300.5 298.2 L301.0 296.9 L301.5 295.7 L302.0 294.4 L302.5 293.2 L303.0 291.9 L303.5 290.7 L304.0 289.5 L304.5 288.3 L305.0 287.1 L305.5 286.0 L306.0 284.8 L306.5 283.7 L307.0 282.6 L307.5 281.5 L308.0 280.4 L308.5 279.3 L309.0 278.3 L309.5 277.3 L310.0 276.2 L310.5 275.2 L311.0 274.2 L311.5 273.3 L312.0 272.3 L312.5 271.4 L313.0 270.5 L313.5 269.6 L314.0 268.7 L314.5 267.8 L315.0 267.0 L315.5 266.2 L316.0 265.3 L316.5 264.6 L317.0 263.8 L317.5 263.0 L318.0 262.3 L318.5 261.6 L319.0 260.9 L319.5 260.2 L320.0 259.6 L320.5 258.9 L321.0 258.3 L321.5 257.7 L322.0 257.1 L322.5 256.6 L323.0 256.0 L323.5 255.5 L324.0 255.0 L324.5 254.5 L325.0 254.1 L325.5 253.6 L326.0 253.2 L326.5 252.8 L327.0 252.5 L327.5 252.1 L328.0 251.8 L328.5 251.5 L329.0 251.2 L329.5 250.9 L330.0 250.7 L330.5 250.4 L331.0 250.2 L331.5 250.1 L332.0 249.9 L332.5 249.8 L333.0 249.6 L333.5 249.5 L334.0 249.5 L334.5 249.4 L335.0 249.4 L335.5 249.4 L336.0 249.4 L336.5 249.4 L337.0 249.5 L337.5 249.5 L338.0 249.6 L338.5 249.8 L339.0 249.9 L339.5 250.1 L340.0 250.2 L340.5 250.4 L341.0 250.7 L341.5 250.9 L342.0 251.2 L342.5 251.5 L343.0 251.8 L343.5 252.1 L344.0 252.5 L344.5 252.8 L345.0 253.2 L345.5 253.6 L346.0 254.1 L346.5 254.5 L347.0 255.0 L347.5 255.5 L348.0 256.0 L348.5 256.6 L349.0 257.1 L349.5 257.7 L350.0 258.3 L350.5 258.9 L351.0 259.6 L351.5 260.2 L352.0 260.9 L352.5 261.6 L353.0 262.3 L353.5 263.0 L354.0 263.8 L354.5 264.6 L355.0 265.3 L355.5 266.2 L356.0 267.0 L356.5 267.8 L357.0 268.7 L357.5 269.6 L358.0 270.5 L358.5 271.4 L359.0 272.3 L359.5 273.3 L360.0 274.2 L360.5 275.2 L361.0 276.2 L361.5 277.3 L362.0 278.3 L362.5 279.3 L363.0 280.4 L363.5 281.5 L364.0 282.6 L364.5 283.7 L365.0 284.8 L365.5 286.0 L366.0 287.1 L366.5 288.3 L367.0 289.5 L367.5 290.7 L368.0 291.9 L368.5 293.2 L369.0 294.4 L369.5 295.7 L370.0 296.9 L370.5 298.2 L371.0 299.5 L371.5 300.8 L372.0 302.1 L372.5 303.5 L373.0 304.8 L373.5 306.2 L374.0 307.5 L374.5 308.9 L375.0 310.3 L375.5 311.7 L376.0 313.1 L376.5 314.5 L377.0 316.0 L377.5 317.4 L378.0 318.9 L378.5 320.3 L379.0 321.8 L379.5 323.3 L380.0 324.7 L380.5 326.2 L381.0 327.7 L381.5 329.2 L382.0 330.7 L382.5 332.2 L383.0 333.8 L383.5 335.3 L384.0 336.8 L384.5 338.4 L385.0 339.9 L385.5 341.5 L386.0 343.0 L386.5 344.6 L387.0 346.2 L387.5 347.7 L388.0 349.3 L388.5 350.9 L389.0 352.4 L389.5 354.0 L390.0 355.6 L390.5 357.2 L391.0 358.8 L391.5 360.4 L392.0 362.0 L392.5 363.6 L393.0 365.1 L393.5 366.7 L394.0 368.3 L394.5 369.9 L395.0 371.5 L395.5 373.1 L396.0 374.7 L396.5 376.3 L397.0 377.9 L397.5 379.5 L398.0 381.0 L398.5 382.6 L399.0 384.2 L399.5 385.8 L400.0 387.3 L400.5 388.9 L401.0 390.5 L401.5 392.0 L402.0 393.6 L402.5 395.1 L403.0 396.7 L403.5 398.2 L404.0 399.8 L404.5 401.3 L405.0 402.8 L405.5 404.3 L406.0 405.8 L406.5 407.3 L407.0 408.8 L407.5 410.3 L408.0 411.8 L408.5 413.3 L409.0 414.7 L409.5 416.2 L410.0 417.6 L410.5 419.1 L411.0 420.5 L411.5 421.9 L412.0 423.3 L412.5 424.7 L413.0 426.1 L413.5 427.5 L414.0 428.8 L414.5 430.2 L415.0 431.5 L415.5 432.9 L416.0 434.2 L416.5 435.5 L417.0 436.8 L417.5 438.1 L418.0 439.3 L418.5 440.6 L419.0 441.8 L419.5 443.1 L420.0 444.3 L420.5 445.5 L421.0 446.7 L421.5 447.8 L422.0 449.0 L422.5 450.1 L423.0 451.3 L423.5 452.4 L424.0 453.5 L424.5 454.6 L425.0 455.6 L425.5 456.7 L426.0 457.7 L426.5 458.7 L427.0 459.7 L427.5 460.7 L428.0 461.7 L428.5 462.6 L429.0 463.5 L429.5 464.5 L430.0 465.4 L430.5 466.2 L431.0 467.1 L431.5 467.9 L432.0 468.8 L432.5 469.6 L433.0 470.4 L433.5 471.1 L434.0 471.9 L434.5 472.6 L435.0 473.3 L435.5 474.0 L436.0 474.7 L436.5 475.3 L437.0 476.0 L437.5 476.6 L438.0 477.2 L438.5 477.7 L439.0 478.3 L439.5 478.8 L440.0 479.3 L440.5 479.8 L441.0 480.3 L441.5 480.8 L442.0 481.2 L442.5 481.6 L443.0 482.0 L443.5 482.4 L444.0 482.7 L444.5 483.0 L445.0 483.3 L445.5 483.6 L446.0 483.9 L446.5 484.1 L447.0 484.3 L447.5 484.5 L448.0 484.7 L448.5 484.9 L449.0 485.0 L449.5 485.1 L450.0 485.2 L450.5 485.3 L451.0 485.3 L451.5 485.4 L452.0 485.4 L452.5 485.4 L453.0 485.3 L453.5 485.3 L454.0 485.2 L454.5 485.1 L455.0 485.0 L455.5 484.8 L456.0 484.7 L456.5 484.5 L457.0 484.3 L457.5 484.0 L458.0 483.8 L458.5 483.5 L459.0 483.2 L459.5 482.9 L460.0 482.6 L460.5 482.2 L461.0 481.8 L461.5 481.4 L462.0 481.0 L462.5 480.6 L463.0 480.1 L463.5 479.6 L464.0 479.1 L464.5 478.6 L465.0 478.1 L465.5 477.5 L466.0 476.9 L466.5 476.3 L467.0 475.7 L467.5 475.1 L468.0 474.4 L468.5 473.7 L469.0 473.0 L469.5 472.3 L470.0 471.6 L470.5 470.8 L471.0 470.0 L471.5 469.2 L472.0 468.4 L472.5 467.6 L473.0 466.8 L473.5 465.9 L474.0 465.0 L474.5 464.1 L475.0 463.2 L475.5 462.2 L476.0 461.3 L476.5 460.3 L477.0 459.3 L477.5 458.3 L478.0 457.3 L478.5 456.2 L479.0 455.2 L479.5 454.1 L480.0 453.0 L480.5 451.9 L481.0 450.8 L481.5 449.7 L482.0 448.5 L482.5 447.4 L483.0 446.2 L483.5 445.0 L484.0 443.8 L484.5 442.6 L485.0 441.3 L485.5 440.1 L486.0 438.8 L486.5 437.6 L487.0 436.3 L487.5 435.0 L488.0 433.7 L488.5 432.3 L489.0 431.0 L489.5 429.7 L490.0 428.3 L490.5 426.9 L491.0 425.5 L491.5 424.2 L492.0 422.8 L492.5 421.3 L493.0 419.9 L493.5 418.5 L494.0 417.1 L494.5 415.6 L495.0 414.1 L495.5 412.7 L496.0 411.2 L496.5 409.7 L497.0 408.2 L497.5 406.7 L498.0 405.2 L498.5 403.7 L499.0 402.2 L499.5 400.7 L500.0 399.1 L500.5 397.6 L501.0 396.1 L501.5 394.5 L502.0 393.0 L502.5 391.4 L503.0 389.8 L503.5 388.3 L504.0 386.7 L504.5 385.1 L505.0 383.6 L505.5 382.0 L506.0 380.4 L506.5 378.8 L507.0 377.2 L507.5 375.6 L508.0 374.1 L508.5 372.5 L509.0 370.9 L509.5 369.3 L510.0 367.7 L510.5 366.1 L511.0 364.5 L511.5 362.9 L512.0 361.3 L512.5 359.7 L513.0 358.1 L513.5 356.6 L514.0 355.0 L514.5 353.4 L515.0 351.8 L515.5 350.2 L516.0 348.7 L516.5 347.1 L517.0 345.5 L517.5 344.0 L518.0 342.4 L518.5 340.9 L519.0 339.3 L519.5 337.8 L520.0 336.2 L520.5 334.7 L521.0 333.2 L521.5 331.6 L522.0 330.1 L522.5 328.6 L523.0 327.1 L523.5 325.6 L524.0 324.1 L524.5 322.7 L525.0 321.2 L525.5 319.7 L526.0 318.3 L526.5 316.8 L527.0 315.4 L527.5 314.0 L528.0 312.6 L528.5 311.2 L529.0 309.8 L529.5 308.4 L530.0 307.0 L530.5 305.6 L531.0 304.3 L531.5 302.9 L532.0 301.6 L532.5 300.3 L533.0 299.0 L533.5 297.7 L534.0 296.4 L534.5 295.2 L535.0 293.9 L535.5 292.7 L536.0 291.4 L536.5 290.2 L537.0 289.0 L537.5 287.9 L538.0 286.7 L538.5 285.5 L539.0 284.4 L539.5 283.3 L540.0 282.2 L540.5 281.1 L541.0 280.0 L541.5 278.9 L542.0 277.9 L542.5 276.8 L543.0 275.8 L543.5 274.8 L544.0 273.9 L544.5 272.9 L545.0 271.9 L545.5 271.0 L546.0 270.1 L546.5 269.2 L547.0 268.3 L547.5 267.5 L548.0 266.6 L548.5 265.8 L549.0 265.0 L549.5 264.2 L550.0 263.5 L550.5 262.7 L551.0 262.0 L551.5 261.3 L552.0 260.6 L552.5 259.9 L553.0 259.3 L553.5 258.7 L554.0 258.1 L554.5 257.5 L555.0 256.9 L555.5 256.3 L556.0 255.8 L556.5 255.3 L557.0 254.8 L557.5 254.4 L558.0 253.9 L558.5 253.5 L559.0 253.1 L559.5 252.7 L560.0 252.3 L560.5 252.0 L561.0 251.7 L561.5 251.4 L562.0 251.1 L562.5 250.8 L563.0 250.6 L563.5 250.4 L564.0 250.2 L564.5 250.0 L565.0 249.8 L565.5 249.7 L566.0 249.6 L566.5 249.5 L567.0 249.4 L567.5 249.4 L568.0 249.4 L568.5 249.4 L569.0 249.4 L569.5 249.4 L570.0 249.5 L570.5 249.6 L571.0 249.7 L571.5 249.8 L572.0 250.0 L572.5 250.1 L573.0 250.3 L573.5 250.5 L574.0 250.8 L574.5 251.0 L575.0 251.3 L575.5 251.6 L576.0 251.9 L576.5 252.3 L577.0 252.6 L577.5 253.0 L578.0 253.4 L578.5 253.8 L579.0 254.3 L579.5 254.7 L580.0 255.2 L580.5 255.7 L581.0 256.2 L581.5 256.8 L582.0 257.4 L582.5 257.9 L583.0 258.5 L583.5 259.2 L584.0 259.8 L584.5 260.5 L585.0 261.2 L585.5 261.9 L586.0 262.6 L586.5 263.3 L587.0 264.1 L587.5 264.9 L588.0 265.7 L588.5 266.5 L589.0 267.3 L589.5 268.2 L590.0 269.0 L590.5 269.9 L591.0 270.8 L591.5 271.8 L592.0 272.7 L592.5 273.7 L593.0 274.6 L593.5 275.6 L594.0 276.6 L594.5 277.7 L595.0 278.7 L595.5 279.8 L596.0 280.8 L596.5 281.9 L597.0 283.0 L597.5 284.2 L598.0 285.3 L598.5 286.4 L599.0 287.6 L599.5 288.8 L600.0 290.0 L600.5 291.2 L601.0 292.4 L601.5 293.7 L602.0 294.9 L602.5 296.2 L603.0 297.5 L603.5 298.7 L604.0 300.0 L604.5 301.4 L605.0 302.7 L605.5 304.0 L606.0 305.4 L606.5 306.7 L607.0 308.1 L607.5 309.5 L608.0 310.9 L608.5 312.3 L609.0 313.7 L609.5 315.1 L610.0 316.5 L610.5 318.0 L611.0 319.4 L611.5 320.9 L612.0 322.4 L612.5 323.8 L613.0 325.3 L613.5 326.8 L614.0 328.3 L614.5 329.8 L615.0 331.3 L615.5 332.9 L616.0 334.4 L616.5 335.9 L617.0 337.5 L617.5 339.0 L618.0 340.5 L618.5 342.1 L619.0 343.7 L619.5 345.2 L620.0 346.8 L620.5 348.3 L621.0 349.9 L621.5 351.5 L622.0 353.1 L622.5 354.7 L623.0 356.2 L623.5 357.8 L624.0 359.4 L624.5 361.0 L625.0 362.6 L625.5 364.2 L626.0 365.8 L626.5 367.4 L627.0 369.0 L627.5 370.6 L628.0 372.2 L628.5 373.7 L629.0 375.3 L629.5 376.9 L630.0 378.5 L630.5 380.1 L631.0 381.7 L631.5 383.3 L632.0 384.8 L632.5 386.4 L633.0 388.0 L633.5 389.5 L634.0 391.1 L634.5 392.7 L635.0 394.2 L635.5 395.8 L636.0 397.3 L636.5 398.8 L637.0 400.4 L637.5 401.9 L638.0 403.4 L638.5 404.9 L639.0 406.4 L639.5 407.9 L640.0 409.4 L640.5 410.9 L641.0 412.4 L641.5 413.9 L642.0 415.3 L642.5 416.8 L643.0 418.2 L643.5 419.6 L644.0 421.1 L644.5 422.5 L645.0 423.9 L645.5 425.3 L646.0 426.7 L646.5 428.0 L647.0 429.4 L647.5 430.7 L648.0 432.1 L648.5 433.4 L649.0 434.7 L649.5 436.0 L650.0 437.3 L650.5 438.6 L651.0 439.8 L651.5 441.1 L652.0 442.3 L652.5 443.5 L653.0 444.8 L653.5 446.0 L654.0 447.1 L654.5 448.3 L655.0 449.5 L655.5 450.6 L656.0 451.7 L656.5 452.8 L657.0 453.9 L657.5 455.0 L658.0 456.0 L658.5 457.1 L659.0 458.1 L659.5 459.1 L660.0 460.1 L660.5 461.1 L661.0 462.0 L661.5 463.0 L662.0 463.9 L662.5 464.8 L663.0 465.7 L663.5 466.6 L664.0 467.4 L664.5 468.3 L665.0 469.1 L665.5 469.9 L666.0 470.7 L666.5 471.4 L667.0 472.2 L667.5 472.9 L668.0 473.6 L668.5 474.3 L669.0 474.9 L669.5 475.6 L670.0 476.2 L670.5 476.8 L671.0 477.4 L671.5 478.0 L672.0 478.5 L672.5 479.0 L673.0 479.5 L673.5 480.0 L674.0 480.5 L674.5 480.9 L675.0 481.4 L675.5 481.8 L676.0 482.1 L676.5 482.5 L677.0 482.8 L677.5 483.2 L678.0 483.5 L678.5 483.7 L679.0 484.0 L679.5 484.2 L680.0 484.4 L680.5 484.6 L681.0 484.8 L681.5 484.9 L682.0 485.1 L682.5 485.2 L683.0 485.3 L683.5 485.3 L684.0 485.4 L684.5 485.4 L685.0 485.4 L685.5 485.3 L686.0 485.3 L686.5 485.2 L687.0 485.1 L687.5 485.0 L688.0 484.9 L688.5 484.8 L689.0 484.6 L689.5 484.4 L690.0 484.2 L690.5 483.9 L691.0 483.7 L691.5 483.4 L692.0 483.1 L692.5 482.8 L693.0 482.4 L693.5 482.1 L694.0 481.7 L694.5 481.3 L695.0 480.8 L695.5 480.4 L696.0 479.9 L696.5 479.4 L697.0 478.9 L697.5 478.4 L698.0 477.9 L698.5 477.3 L699.0 476.7 L699.5 476.1 L700.0 475.5 L700.5 474.8 L701.0 474.1 L701.5 473.5 L702.0 472.7 L702.5 472.0 L703.0 471.3 L703.5 470.5 L704.0 469.7 L704.5 468.9 L705.0 468.1 L705.5 467.3 L706.0 466.4 L706.5 465.5 L707.0 464.6 L707.5 463.7 L708.0 462.8 L708.5 461.9 L709.0 460.9 L709.5 459.9 L710.0 458.9 L710.5 457.9 L711.0 456.9 L711.5 455.8 L712.0 454.8 L712.5 453.7 L713.0 452.6 L713.5 451.5 L714.0 450.4 L714.5 449.2 L715.0 448.1 L715.5 446.9 L716.0 445.7 L716.5 444.5 L717.0 443.3 L717.5 442.1 L718.0 440.8 L718.5 439.6 L719.0 438.3 L719.5 437.0 L720.0 435.8 L720.5 434.4 L721.0 433.1 L721.5 431.8 L722.0 430.5 L722.5 429.1 L723.0 427.7 L723.5 426.4 L724.0 425.0 L724.5 423.6 L725.0 422.2 L725.5 420.8 L726.0 419.4 L726.5 417.9 L727.0 416.5 L727.5 415.0 L728.0 413.6 L728.5 412.1 L729.0 410.6 L729.5 409.1 L730.0 407.6 L730.5 406.1 L731.0 404.6 L731.5 403.1 L732.0 401.6 L732.5 400.1 L733.0 398.5 L733.5 397.0 L734.0 395.4 L734.5 393.9 L735.0 392.3 L735.5 390.8 L736.0 389.2 L736.5 387.7 L737.0 386.1 L737.5 384.5 L738.0 382.9 L738.5 381.4 L739.0 379.8 L739.5 378.2 L740.0 376.6 L740.5 375.0 L741.0 373.4 L741.5 371.8 L742.0 370.2 L742.5 368.6 L743.0 367.1 L743.5 365.5 L744.0 363.9 L744.5 362.3 L745.0 360.7 L745.5 359.1 L746.0 357.5 L746.5 355.9 L747.0 354.3 L747.5 352.8 L748.0 351.2 L748.5 349.6 L749.0 348.0 L749.5 346.5 L750.0 344.9 L750.5 343.3 L751.0 341.8 L751.5 340.2 L752.0 338.7 L752.5 337.1 L753.0 335.6 L753.5 334.1 L754.0 332.6 L754.5 331.0 L755.0 329.5 L755.5 328.0 L756.0 326.5 L756.5 325.0 L757.0 323.5 L757.5 322.1 L758.0 320.6 L758.5 319.1 L759.0 317.7 L759.5 316.3 L760.0 314.8 L760.5 313.4 L761.0 312.0 L761.5 310.6 L762.0 309.2 L762.5 307.8 L763.0 306.5 L763.5 305.1 L764.0 303.7 L764.5 302.4 L765.0 301.1 L765.5 299.8 L766.0 298.5 L766.5 297.2 L767.0 295.9 L767.5 294.7 L768.0 293.4 L768.5 292.2 L769.0 291.0 L769.5 289.8 L770.0 288.6 L770.5 287.4 L771.0 286.2 L771.5 285.1 L772.0 283.9 L772.5 282.8 L773.0 281.7 L773.5 280.6 L774.0 279.6 L774.5 278.5 L775.0 277.5 L775.5 276.4 L776.0 275.4 L776.5 274.4 L777.0 273.5 L777.5 272.5 L778.0 271.6 L778.5 270.7 L779.0 269.8 L779.5 268.9 L780.0 268.0 L780.5 267.1 L781.0 266.3 L781.5 265.5 L782.0 264.7 L782.5 263.9 L783.0 263.2 L783.5 262.4 L784.0 261.7 L784.5 261.0 L785.0 260.3 L785.5 259.7 L786.0 259.0 L786.5 258.4 L787.0 257.8 L787.5 257.2 L788.0 256.7 L788.5 256.1 L789.0 255.6 L789.5 255.1 L790.0 254.6 L790.5 254.2 L791.0 253.7 L791.5 253.3 L792.0 252.9 L792.5 252.5 L793.0 252.2 L793.5 251.8 L794.0 251.5 L794.5 251.2 L795.0 251.0 L795.5 250.7 L796.0 250.5 L796.5 250.3 L797.0 250.1 L797.5 249.9 L798.0 249.8 L798.5 249.7 L799.0 249.6 L799.5 249.5 L800.0 249.4 L800.5 249.4 L801.0 249.4 L801.5 249.4 L802.0 249.4 L802.5 249.5 L803.0 249.5 L803.5 249.6 L804.0 249.7 L804.5 249.9 L805.0 250.0 L805.5 250.2 L806.0 250.4 L806.5 250.6 L807.0 250.9 L807.5 251.1 L808.0 251.4 L808.5 251.7 L809.0 252.0 L809.5 252.4 L810.0 252.8 L810.5 253.2 L811.0 253.6 L811.5 254.0 L812.0 254.4 L812.5 254.9 L813.0 255.4 L813.5 255.9 L814.0 256.5 L814.5 257.0 L815.0 257.6 L815.5 258.2 L816.0 258.8 L816.5 259.4 L817.0 260.1 L817.5 260.7 L818.0 261.4 L818.5 262.1 L819.0 262.9 L819.5 263.6 L820.0 264.4 L820.5 265.2 L821.0 266.0 L821.5 266.8 L822.0 267.7 L822.5 268.5 L823.0 269.4 L823.5 270.3 L824.0 271.2 L824.5 272.1 L825.0 273.1 L825.5 274.1 L826.0 275.0 L826.5 276.0 L827.0 277.1 L827.5 278.1 L828.0 279.1 L828.5 280.2 L829.0 281.3 L829.5 282.4 L830.0 283.5 L830.5 284.6 L831.0 285.8 L831.5 286.9 L832.0 288.1 L832.5 289.3 L833.0 290.5 L833.5 291.7 L834.0 292.9 L834.5 294.2 L835.0 295.4 L835.5 296.7 L836.0 298.0 L836.5 299.3 L837.0 300.6 L837.5 301.9 L838.0 303.2 L838.5 304.6 L839.0 305.9 L839.5 307.3 L840.0 308.7 L840.5 310.0 L841.0 311.4 L841.5 312.8 L842.0 314.3 L842.5 315.7 L843.0 317.1 L843.5 318.6 L844.0 320.0 L844.5 321.5 L845.0 323.0 L845.5 324.4 L846.0 325.9 L846.5 327.4 L847.0 328.9 L847.5 330.4 L848.0 331.9 L848.5 333.5 L849.0 335.0 L849.5 336.5 L850.0 338.1 L850.5 339.6 L851.0 341.2 L851.5 342.7 L852.0 344.3 L852.5 345.8 L853.0 347.4 L853.5 349.0 L854.0 350.6 L854.5 352.1 L855.0 353.7 L855.5 355.3 L856.0 356.9 L856.5 358.5 L857.0 360.1 L857.5 361.6 L858.0 363.2 L858.5 364.8 L859.0 366.4 L859.5 368.0 L860.0 369.6 L860.5 371.2 L861.0 372.8 L861.5 374.4 L862.0 376.0 L862.5 377.6 L863.0 379.1 L863.5 380.7 L864.0 382.3 L864.5 383.9 L865.0 385.5 L865.5 387.0 L866.0 388.6 L866.5 390.2 L867.0 391.7 L867.5 393.3 L868.0 394.8 L868.5 396.4 L869.0 397.9 L869.5 399.5 L870.0 401.0 L870.5 402.5 L871.0 404.0 L871.5 405.5 L872.0 407.0 L872.5 408.5 L873.0 410.0 L873.5 411.5 L874.0 413.0 L874.5 414.4 L875.0 415.9 L875.5 417.3 L876.0 418.8 L876.5 420.2 L877.0 421.6 L877.5 423.0 L878.0 424.4 L878.5 425.8 L879.0 427.2 L879.5 428.6 L880.0 429.9 L880.5 431.3 L881.0 432.6 L881.5 433.9 L882.0 435.2 L882.5 436.5 L883.0 437.8 L883.5 439.1 L884.0 440.3 L884.5 441.6 L885.0 442.8 L885.5 444.0 L886.0 445.2 L886.5 446.4 L887.0 447.6 L887.5 448.8 L888.0 449.9 L888.5 451.0 L889.0 452.2 L889.5 453.3 L890.0 454.3 L890.5 455.4 L891.0 456.5 L891.5 457.5 L892.0 458.5 L892.5 459.5 L893.0 460.5 L893.5 461.5 L894.0 462.4 L894.5 463.4 L895.0 464.3 L895.5 465.2 L896.0 466.1 L896.5 466.9 L897.0 467.8 L897.5 468.6 L898.0 469.4 L898.5 470.2 L899.0 471.0 L899.5 471.7 L900.0 472.5 L900.5 473.2 L901.0 473.9 L901.5 474.5 L902.0 475.2 L902.5 475.8 L903.0 476.5 L903.5 477.1 L904.0 477.6 L904.5 478.2 L905.0 478.7 L905.5 479.2 L906.0 479.7 L906.5 480.2 L907.0 480.7 L907.5 481.1 L908.0 481.5 L908.5 481.9 L909.0 482.3 L909.5 482.6 L910.0 483.0 L910.5 483.3 L911.0 483.6 L911.5 483.8 L912.0 484.1 L912.5 484.3 L913.0 484.5 L913.5 484.7 L914.0 484.8 L914.5 485.0 L915.0 485.1 L915.5 485.2 L916.0 485.3 L916.5 485.3 L917.0 485.4 L917.5 485.4 L918.0 485.4 L918.5 485.3 L919.0 485.3 L919.5 485.2 L920.0 485.1 L920.5 485.0 L921.0 484.8 L921.5 484.7 L922.0 484.5 L922.5 484.3 L923.0 484.1 L923.5 483.8 L924.0 483.6 L924.5 483.3 L925.0 483.0 L925.5 482.6 L926.0 482.3 L926.5 481.9 L927.0 481.5 L927.5 481.1 L928.0 480.7 L928.5 480.2 L929.0 479.7 L929.5 479.2 L930.0 478.7 L930.5 478.2 L931.0 477.6 L931.5 477.1 L932.0 476.5 L932.5 475.8 L933.0 475.2 L933.5 474.5 L934.0 473.9 L934.5 473.2 L935.0 472.5 L935.5 471.7 L936.0 471.0 L936.5 470.2 L937.0 469.4 L937.5 468.6 L938.0 467.8 L938.5 466.9 L939.0 466.1 L939.5 465.2 L940.0 464.3 L940.5 463.4 L941.0 462.4 L941.5 461.5 L942.0 460.5 L942.5 459.5 L943.0 458.5 L943.5 457.5 L944.0 456.5 L944.5 455.4 L945.0 454.3 L945.5 453.3 L946.0 452.2 L946.5 451.0 L947.0 449.9 L947.5 448.8 L948.0 447.6 L948.5 446.4 L949.0 445.2 L949.5 444.0 L950.0 442.8 L950.5 441.6 L951.0 440.3 L951.5 439.1 L952.0 437.8 L952.5 436.5 L953.0 435.2 L953.5 433.9 L954.0 432.6 L954.5 431.3 L955.0 429.9 L955.5 428.6 L956.0 427.2 L956.5 425.8 L957.0 424.4 L957.5 423.0 L958.0 421.6 L958.5 420.2 L959.0 418.8 L959.5 417.3 L960.0 415.9 L960.5 414.4 L961.0 413.0 L961.5 411.5 L962.0 410.0 L962.5 408.5 L963.0 407.0 L963.5 405.5 L964.0 404.0 L964.5 402.5 L965.0 401.0 L965.5 399.5 L966.0 397.9 L966.5 396.4 L967.0 394.8 L967.5 393.3 L968.0 391.7 L968.5 390.2 L969.0 388.6 L969.5 387.0 L970.0 385.5 L970.5 383.9 L971.0 382.3 L971.5 380.7 L972.0 379.1 L972.5 377.6 L973.0 376.0 L973.5 374.4 L974.0 372.8 L974.5 371.2 L975.0 369.6 L975.5 368.0 L976.0 366.4 L976.5 364.8 L977.0 363.2 L977.5 361.6 L978.0 360.1 L978.5 358.5 L979.0 356.9 L979.5 355.3 L980.0 353.7 L980.5 352.1 L981.0 350.6 L981.5 349.0 L982.0 347.4 L982.5 345.8 L983.0 344.3 L983.5 342.7 L984.0 341.2 L984.5 339.6 L985.0 338.1 L985.5 336.5 L986.0 335.0 L986.5 333.5 L987.0 331.9 L987.5 330.4 L988.0 328.9 L988.5 327.4 L989.0 325.9 L989.5 324.4 L990.0 323.0 L990.5 321.5 L991.0 320.0 L991.5 318.6 L992.0 317.1 L992.5 315.7 L993.0 314.3 L993.5 312.8 L994.0 311.4 L994.5 310.0 L995.0 308.7 L995.5 307.3 L996.0 305.9 L996.5 304.6 L997.0 303.2 L997.5 301.9 L998.0 300.6 L998.5 299.3 L999.0 298.0 L999.5 296.7 L1000.0 295.4 L1000.5 294.2 L1001.0 292.9 L1001.5 291.7 L1002.0 290.5 L1002.5 289.3 L1003.0 288.1 L1003.5 286.9 L1004.0 285.8 L1004.5 284.6 L1005.0 283.5 L1005.5 282.4 L1006.0 281.3 L1006.5 280.2 L1007.0 279.1 L1007.5 278.1 L1008.0 277.1 L1008.5 276.0 L1009.0 275.0 L1009.5 274.1 L1010.0 273.1 L1010.5 272.1 L1011.0 271.2 L1011.5 270.3 L1012.0 269.4 L1012.5 268.5 L1013.0 267.7 L1013.5 266.8 L1014.0 266.0 L1014.5 265.2 L1015.0 264.4 L1015.5 263.6 L1016.0 262.9 L1016.5 262.1 L1017.0 261.4 L1017.5 260.7 L1018.0 260.1 L1018.5 259.4 L1019.0 258.8 L1019.5 258.2 L1020.0 257.6 L1020.5 257.0 L1021.0 256.5 L1021.5 255.9 L1022.0 255.4 L1022.5 254.9 L1023.0 254.4 L1023.5 254.0 L1024.0 253.6 L1024.5 253.2 L1025.0 252.8 L1025.5 252.4 L1026.0 252.0 L1026.5 251.7 L1027.0 251.4 L1027.5 251.1 L1028.0 250.9 L1028.5 250.6 L1029.0 250.4 L1029.5 250.2 L1030.0 250.0 L1030.5 249.9 L1031.0 249.7 L1031.5 249.6 L1032.0 249.5 L1032.5 249.5 L1033.0 249.4 L1033.5 249.4 L1034.0 249.4 L1034.5 249.4 L1035.0 249.4 L1035.5 249.5 L1036.0 249.6 L1036.5 249.7 L1037.0 249.8 L1037.5 249.9 L1038.0 250.1 L1038.5 250.3 L1039.0 250.5 L1039.5 250.7 L1040.0 251.0 L1040.5 251.2 L1041.0 251.5 L1041.5 251.8 L1042.0 252.2 L1042.5 252.5 L1043.0 252.9 L1043.5 253.3 L1044.0 253.7 L1044.5 254.2 L1045.0 254.6 L1045.5 255.1 L1046.0 255.6 L1046.5 256.1 L1047.0 256.7 L1047.5 257.2 L1048.0 257.8 L1048.5 258.4 L1049.0 259.0 L1049.5 259.7 L1050.0 260.3 L1050.5 261.0 L1051.0 261.7 L1051.5 262.4 L1052.0 263.2 L1052.5 263.9 L1053.0 264.7 L1053.5 265.5 L1054.0 266.3 L1054.5 267.1 L1055.0 268.0 L1055.5 268.9 L1056.0 269.8 L1056.5 270.7 L1057.0 271.6 L1057.5 272.5 L1058.0 273.5 L1058.5 274.4 L1059.0 275.4 L1059.5 276.4 L1060.0 277.5 L1060.5 278.5 L1061.0 279.6 L1061.5 280.6 L1062.0 281.7 L1062.5 282.8 L1063.0 283.9 L1063.5 285.1 L1064.0 286.2 L1064.5 287.4 L1065.0 288.6 L1065.5 289.8 L1066.0 291.0 L1066.5 292.2 L1067.0 293.4 L1067.5 294.7 L1068.0 295.9 L1068.5 297.2 L1069.0 298.5 L1069.5 299.8 L1070.0 301.1 L1070.5 302.4 L1071.0 303.7 L1071.5 305.1 L1072.0 306.5 L1072.5 307.8 L1073.0 309.2 L1073.5 310.6 L1074.0 312.0 L1074.5 313.4 L1075.0 314.8 L1075.5 316.3 L1076.0 317.7 L1076.5 319.1 L1077.0 320.6 L1077.5 322.1 L1078.0 323.5 L1078.5 325.0 L1079.0 326.5 L1079.5 328.0 L1080.0 329.5 L1080.5 331.0 L1081.0 332.6 L1081.5 334.1 L1082.0 335.6 L1082.5 337.1 L1083.0 338.7 L1083.5 340.2 L1084.0 341.8 L1084.5 343.3 L1085.0 344.9 L1085.5 346.5 L1086.0 348.0 L1086.5 349.6 L1087.0 351.2 L1087.5 352.8 L1088.0 354.3 L1088.5 355.9 L1089.0 357.5 L1089.5 359.1 L1090.0 360.7 L1090.5 362.3 L1091.0 363.9 L1091.5 365.5 L1092.0 367.1 L1092.5 368.6 L1093.0 370.2 L1093.5 371.8 L1094.0 373.4 L1094.5 375.0 L1095.0 376.6 L1095.5 378.2 L1096.0 379.8 L1096.5 381.4 L1097.0 382.9 L1097.5 384.5 L1098.0 386.1 L1098.5 387.7 L1099.0 389.2 L1099.5 390.8 L1100.0 392.3 L1100.5 393.9 L1101.0 395.4 L1101.5 397.0 L1102.0 398.5 L1102.5 400.1 L1103.0 401.6 L1103.5 403.1 L1104.0 404.6 L1104.5 406.1 L1105.0 407.6 L1105.5 409.1 L1106.0 410.6 L1106.5 412.1 L1107.0 413.6 L1107.5 415.0 L1108.0 416.5 L1108.5 417.9 L1109.0 419.4 L1109.5 420.8 L1110.0 422.2 L1110.5 423.6 L1111.0 425.0 L1111.5 426.4 L1112.0 427.7 L1112.5 429.1 L1113.0 430.5 L1113.5 431.8 L1114.0 433.1 L1114.5 434.4 L1115.0 435.8 L1115.5 437.0 L1116.0 438.3 L1116.5 439.6 L1117.0 440.8 L1117.5 442.1 L1118.0 443.3 L1118.5 444.5 L1119.0 445.7 L1119.5 446.9 L1120.0 448.1 L1120.5 449.2 L1121.0 450.4 L1121.5 451.5 L1122.0 452.6 L1122.5 453.7 L1123.0 454.8 L1123.5 455.8 L1124.0 456.9 L1124.5 457.9 L1125.0 458.9 L1125.5 459.9 L1126.0 460.9 L1126.5 461.9 L1127.0 462.8 L1127.5 463.7 L1128.0 464.6 L1128.5 465.5 L1129.0 466.4 L1129.5 467.3 L1130.0 468.1 L1130.5 468.9 L1131.0 469.7 L1131.5 470.5 L1132.0 471.3 L1132.5 472.0 L1133.0 472.7 L1133.5 473.5 L1134.0 474.1 L1134.5 474.8 L1135.0 475.5 L1135.5 476.1 L1136.0 476.7 L1136.5 477.3 L1137.0 477.9 L1137.5 478.4 L1138.0 478.9 L1138.5 479.4 L1139.0 479.9 L1139.5 480.4 L1140.0 480.8 L1140.5 481.3 L1141.0 481.7 L1141.5 482.1 L1142.0 482.4 L1142.5 482.8 L1143.0 483.1 L1143.5 483.4 L1144.0 483.7 L1144.5 483.9 L1145.0 484.2 L1145.5 484.4 L1146.0 484.6 L1146.5 484.8 L1147.0 484.9 L1147.5 485.0 L1148.0 485.1 L1148.5 485.2 L1149.0 485.3 L1149.5 485.3 L1150.0 485.4 L1150.5 485.4 L1151.0 485.4 L1151.5 485.3 L1152.0 485.3 L1152.5 485.2 L1153.0 485.1 L1153.5 484.9 L1154.0 484.8 L1154.5 484.6 L1155.0 484.4 L1155.5 484.2 L1156.0 484.0 L1156.5 483.7 L1157.0 483.5 L1157.5 483.2 L1158.0 482.8 L1158.5 482.5 L1159.0 482.1 L1159.5 481.8 L1160.0 481.4 L1160.5 480.9 L1161.0 480.5 L1161.5 480.0 L1162.0 479.5 L1162.5 479.0 L1163.0 478.5 L1163.5 478.0 L1164.0 477.4 L1164.5 476.8 L1165.0 476.2 L1165.5 475.6 L1166.0 474.9 L1166.5 474.3 L1167.0 473.6 L1167.5 472.9 L1168.0 472.2 L1168.5 471.4 L1169.0 470.7 L1169.5 469.9 L1170.0 469.1 L1170.5 468.3 L1171.0 467.4 L1171.5 466.6 L1172.0 465.7 L1172.5 464.8 L1173.0 463.9 L1173.5 463.0 L1174.0 462.0 L1174.5 461.1 L1175.0 460.1 L1175.5 459.1 L1176.0 458.1 L1176.5 457.1 L1177.0 456.0 L1177.5 455.0 L1178.0 453.9 L1178.5 452.8 L1179.0 451.7 L1179.5 450.6 L1180.0 449.5 L1180.5 448.3 L1181.0 447.1 L1181.5 446.0 L1182.0 444.8 L1182.5 443.5 L1183.0 442.3 L1183.5 441.1 L1184.0 439.8 L1184.5 438.6 L1185.0 437.3 L1185.5 436.0 L1186.0 434.7 L1186.5 433.4 L1187.0 432.1 L1187.5 430.7 L1188.0 429.4 L1188.5 428.0 L1189.0 426.7 L1189.5 425.3 L1190.0 423.9 L1190.5 422.5 L1191.0 421.1 L1191.5 419.6 L1192.0 418.2 L1192.5 416.8 L1193.0 415.3 L1193.5 413.9 L1194.0 412.4 L1194.5 410.9 L1195.0 409.4 L1195.5 407.9 L1196.0 406.4 L1196.5 404.9 L1197.0 403.4 L1197.5 401.9 L1198.0 400.4 L1198.5 398.8 L1199.0 397.3 L1199.5 395.8 L1200.0 394.2 L1200.5 392.7 L1201.0 391.1 L1201.5 389.5 L1202.0 388.0 L1202.5 386.4 L1203.0 384.8 L1203.5 383.3 L1204.0 381.7 L1204.5 380.1 L1205.0 378.5 L1205.5 376.9 L1206.0 375.3 L1206.5 373.7 L1207.0 372.2 L1207.5 370.6 L1208.0 369.0 L1208.5 367.4" stroke="#00ff00" stroke-width="1.4" fill="none" stroke-linejoin="round"/>
<path d="M44.5 155.5 L45.0 158.4 L45.5 161.2 L46.0 164.1 L46.5 167.0 L47.0 169.9 L47.5 172.7 L48.0 175.6 L48.5 178.5 L49.0 181.3 L49.5 184.2 L50.0 187.1 L50.5 190.0 L51.0 192.8 L51.5 195.7 L52.0 198.6 L52.5 201.4 L53.0 204.3 L53.5 207.2 L54.0 210.0 L54.5 212.9 L55.0 215.8 L55.5 218.7 L56.0 221.5 L56.5 224.4 L57.0 227.3 L57.5 230.1 L58.0 233.0 L58.5 235.9 L59.0 238.8 L59.5 241.6 L60.0 244.5 L60.5 247.4 L61.0 250.2 L61.5 253.1 L62.0 256.0 L62.5 258.9 L63.0 261.7 L63.5 264.6 L64.0 267.5 L64.5 270.3 L65.0 273.2 L65.5 276.1 L66.0 278.9 L66.5 281.8 L67.0 284.7 L67.5 287.6 L68.0 290.4 L68.5 293.3 L69.0 296.2 L69.5 299.0 L70.0 301.9 L70.5 304.8 L71.0 307.7 L71.5 310.5 L72.0 313.4 L72.5 316.3 L73.0 319.1 L73.5 322.0 L74.0 324.9 L74.5 327.8 L75.0 330.6 L75.5 333.5 L76.0 336.4 L76.5 339.2 L77.0 342.1 L77.5 345.0 L78.0 347.9 L78.5 350.7 L79.0 353.6 L79.5 356.5 L80.0 359.3 L80.5 362.2 L81.0 365.1 L81.5 367.9 L82.0 370.8 L82.5 373.7 L83.0 376.6 L83.5 379.4 L84.0 382.3 L84.5 385.2 L85.0 388.0 L85.5 390.8 L86.0 393.5 L86.5 396.1 L87.0 398.7 L87.5 401.1 L88.0 403.5 L88.5 405.8 L89.0 408.1 L89.5 410.2 L90.0 412.3 L90.5 414.3 L91.0 416.2 L91.5 418.0 L92.0 419.7 L92.5 421.4 L93.0 423.0 L93.5 424.5 L94.0 425.9 L94.5 427.3 L95.0 428.5 L95.5 429.7 L96.0 430.8 L96.5 431.9 L97.0 432.8 L97.5 433.7 L98.0 434.5 L98.5 435.2 L99.0 435.8 L99.5 436.4 L100.0 436.8 L100.5 437.2 L101.0 437.5 L101.5 437.8 L102.0 437.9 L102.5 438.0 L103.0 438.0 L103.5 437.9 L104.0 437.7 L104.5 437.5 L105.0 437.2 L105.5 436.8 L106.0 436.3 L106.5 435.7 L107.0 435.1 L107.5 434.4 L108.0 433.6 L108.5 432.7 L109.0 431.7 L109.5 430.7 L110.0 429.6 L110.5 428.4 L111.0 427.1 L111.5 425.7 L112.0 424.3 L112.5 422.8 L113.0 421.2 L113.5 419.5 L114.0 417.8 L114.5 415.9 L115.0 414.0 L115.5 412.1 L116.0 410.0 L116.5 407.8 L117.0 405.6 L117.5 403.3 L118.0 400.9 L118.5 398.5 L119.0 395.9 L119.5 393.3 L120.0 390.6 L120.5 387.8 L121.0 385.0 L121.5 382.1 L122.0 379.3 L122.5 376.4 L123.0 373.6 L123.5 370.7 L124.0 367.9 L124.5 365.0 L125.0 362.2 L125.5 359.3 L126.0 356.5 L126.5 353.6 L127.0 350.8 L127.5 347.9 L128.0 345.1 L128.5 342.2 L129.0 339.4 L129.5 336.5 L130.0 333.7 L130.5 330.8 L131.0 328.0 L131.5 325.1 L132.0 322.3 L132.5 319.4 L133.0 316.6 L133.5 313.7 L134.0 310.9 L134.5 308.0 L135.0 305.2 L135.5 302.3 L136.0 299.5 L136.5 296.6 L137.0 293.8 L137.5 290.9 L138.0 288.1 L138.5 285.2 L139.0 282.4 L139.5 279.5 L140.0 276.7 L140.5 273.8 L141.0 271.0 L141.5 268.1 L142.0 265.3 L142.5 262.4 L143.0 259.6 L143.5 256.7 L144.0 253.8 L144.5 251.0 L145.0 248.1 L145.5 245.3 L146.0 242.4 L146.5 239.6 L147.0 236.7 L147.5 233.9 L148.0 231.0 L148.5 228.2 L149.0 225.3 L149.5 222.5 L150.0 219.6 L150.5 216.8 L151.0 213.9 L151.5 211.1 L152.0 208.2 L152.5 205.4 L153.0 202.5 L153.5 199.7 L154.0 196.8 L154.5 194.0 L155.0 191.1 L155.5 188.3 L156.0 185.4 L156.5 182.6 L157.0 179.7 L157.5 176.9 L158.0 174.0 L158.5 171.2 L159.0 168.3 L159.5 165.5 L160.0 162.6 L160.5 159.8 L161.0 158.2 L161.5 161.5 L162.0 164.8 L162.5 168.2 L163.0 171.5 L163.5 174.8 L164.0 178.2 L164.5 181.5 L165.0 184.8 L165.5 188.2 L166.0 191.5 L166.5 194.8 L167.0 198.2 L167.5 201.5 L168.0 204.8 L168.5 208.2 L169.0 211.5 L169.5 214.8 L170.0 218.1 L170.5 221.5 L171.0 224.8 L171.5 228.1 L172.0 231.5 L172.5 234.8 L173.0 238.1 L173.5 241.5 L174.0 244.8 L174.5 248.1 L175.0 251.5 L175.5 254.8 L176.0 258.1 L176.5 261.5 L177.0 264.8 L177.5 268.1 L178.0 271.5 L178.5 274.8 L179.0 278.1 L179.5 281.5 L180.0 284.8 L180.5 288.1 L181.0 291.5 L181.5 294.8 L182.0 298.1 L182.5 301.5 L183.0 304.8 L183.5 308.1 L184.0 311.5 L184.5 314.8 L185.0 318.1 L185.5 321.4 L186.0 324.8 L186.5 328.1 L187.0 331.4 L187.5 334.8 L188.0 338.1 L188.5 341.4 L189.0 344.8 L189.5 348.1 L190.0 351.4 L190.5 354.8 L191.0 358.1 L191.5 361.4 L192.0 364.8 L192.5 368.1 L193.0 371.4 L193.5 374.8 L194.0 378.1 L194.5 381.4 L195.0 384.8 L195.5 388.1 L196.0 391.4 L196.5 394.8 L197.0 398.1 L197.5 401.4 L198.0 404.8 L198.5 408.1 L199.0 411.4 L199.5 414.8 L200.0 418.1 L200.5 421.4 L201.0 424.8 L201.5 428.1 L202.0 431.3 L202.5 434.4 L203.0 437.4 L203.5 440.3 L204.0 443.2 L204.5 445.9 L205.0 448.6 L205.5 451.2 L206.0 453.6 L206.5 456.0 L207.0 458.3 L207.5 460.5 L208.0 462.6 L208.5 464.6 L209.0 466.5 L209.5 468.3 L210.0 470.1 L210.5 471.7 L211.0 473.3 L211.5 474.7 L212.0 476.1 L212.5 477.3 L213.0 478.5 L213.5 479.6 L214.0 480.6 L214.5 481.5 L215.0 482.3 L215.5 483.0 L216.0 483.6 L216.5 484.1 L217.0 484.6 L217.5 484.9 L218.0 485.2 L218.5 485.3 L219.0 485.4 L219.5 485.4 L220.0 485.2 L220.5 485.0 L221.0 484.7 L221.5 484.3 L222.0 483.8 L222.5 483.2 L223.0 482.6 L223.5 481.8 L224.0 480.9 L224.5 480.0 L225.0 478.9 L225.5 477.8 L226.0 476.5 L226.5 475.2 L227.0 473.8 L227.5 472.3 L228.0 470.6 L228.5 468.9 L229.0 467.1 L229.5 465.3 L230.0 463.3 L230.5 461.2 L231.0 459.0 L231.5 456.8 L232.0 454.4 L232.5 452.0 L233.0 449.4 L233.5 446.8 L234.0 444.0 L234.5 441.2 L235.0 438.3 L235.5 435.3 L236.0 432.2 L236.5 429.0 L237.0 425.7 L237.5 422.4 L238.0 419.0 L238.5 415.7 L239.0 412.3 L239.5 409.0 L240.0 405.6 L240.5 402.3 L241.0 398.9 L241.5 395.5 L242.0 392.2 L242.5 388.8 L243.0 385.5 L243.5 382.1 L244.0 378.8 L244.5 375.4 L245.0 372.1 L245.5 368.7 L246.0 365.4 L246.5 362.0 L247.0 358.7 L247.5 355.3 L248.0 352.0 L248.5 348.6 L249.0 345.3 L249.5 341.9 L250.0 338.6 L250.5 335.2 L251.0 331.8 L251.5 328.5 L252.0 325.1 L252.5 321.8 L253.0 318.4 L253.5 315.1 L254.0 311.7 L254.5 308.4 L255.0 305.0 L255.5 301.7 L256.0 298.3 L256.5 295.0 L257.0 291.6 L257.5 288.3 L258.0 284.9 L258.5 281.6 L259.0 278.2 L259.5 274.9 L260.0 271.5 L260.5 268.1 L261.0 264.8 L261.5 261.4 L262.0 258.1 L262.5 254.7 L263.0 251.4 L263.5 248.0 L264.0 244.7 L264.5 241.3 L265.0 238.0 L265.5 234.6 L266.0 231.3 L266.5 227.9 L267.0 224.6 L267.5 221.2 L268.0 217.9 L268.5 214.5 L269.0 211.2 L269.5 207.8 L270.0 204.4 L270.5 201.1 L271.0 197.7 L271.5 194.4 L272.0 191.0 L272.5 187.7 L273.0 184.3 L273.5 181.0 L274.0 177.6 L274.5 174.3 L275.0 170.9 L275.5 167.6 L276.0 164.2 L276.5 160.9 L277.0 157.5 L277.5 156.6 L278.0 159.5 L278.5 162.4 L279.0 165.3 L279.5 168.1 L280.0 171.0 L280.5 173.9 L281.0 176.7 L281.5 179.6 L282.0 182.5 L282.5 185.4 L283.0 188.2 L283.5 191.1 L284.0 194.0 L284.5 196.8 L285.0 199.7 L285.5 202.6 L286.0 205.5 L286.5 208.3 L287.0 211.2 L287.5 214.1 L288.0 216.9 L288.5 219.8 L289.0 222.7 L289.5 225.6 L290.0 228.4 L290.5 231.3 L291.0 234.2 L291.5 237.0 L292.0 239.9 L292.5 242.8 L293.0 245.6 L293.5 248.5 L294.0 251.4 L294.5 254.3 L295.0 257.1 L295.5 260.0 L296.0 262.9 L296.5 265.7 L297.0 268.6 L297.5 271.5 L298.0 274.4 L298.5 277.2 L299.0 280.1 L299.5 283.0 L300.0 285.8 L300.5 288.7 L301.0 291.6 L301.5 294.5 L302.0 297.3 L302.5 300.2 L303.0 303.1 L303.5 305.9 L304.0 308.8 L304.5 311.7 L305.0 314.5 L305.5 317.4 L306.0 320.3 L306.5 323.2 L307.0 326.0 L307.5 328.9 L308.0 331.8 L308.5 334.6 L309.0 337.5 L309.5 340.4 L310.0 343.3 L310.5 346.1 L311.0 349.0 L311.5 351.9 L312.0 354.7 L312.5 357.6 L313.0 360.5 L313.5 363.4 L314.0 366.2 L314.5 369.1 L315.0 372.0 L315.5 374.8 L316.0 377.7 L316.5 380.6 L317.0 383.5 L317.5 386.3 L318.0 389.2 L318.5 391.9 L319.0 394.6 L319.5 397.2 L320.0 399.7 L320.5 402.1 L321.0 404.5 L321.5 406.7 L322.0 408.9 L322.5 411.0 L323.0 413.1 L323.5 415.0 L324.0 416.9 L324.5 418.7 L325.0 420.4 L325.5 422.0 L326.0 423.6 L326.5 425.1 L327.0 426.5 L327.5 427.8 L328.0 429.0 L328.5 430.2 L329.0 431.3 L329.5 432.3 L330.0 433.2 L330.5 434.0 L331.0 434.8 L331.5 435.4 L332.0 436.0 L332.5 436.6 L333.0 437.0 L333.5 437.4 L334.0 437.6 L334.5 437.8 L335.0 438.0 L335.5 438.0 L336.0 438.0 L336.5 437.8 L337.0 437.6 L337.5 437.4 L338.0 437.0 L338.5 436.6 L339.0 436.1 L339.5 435.5 L340.0 434.8 L340.5 434.0 L341.0 433.2 L341.5 432.3 L342.0 431.3 L342.5 430.2 L343.0 429.1 L343.5 427.9 L344.0 426.6 L344.5 425.2 L345.0 423.7 L345.5 422.2 L346.0 420.5 L346.5 418.8 L347.0 417.1 L347.5 415.2 L348.0 413.3 L348.5 411.2 L349.0 409.1 L349.5 407.0 L350.0 404.7 L350.5 402.4 L351.0 400.0 L351.5 397.5 L352.0 394.9 L352.5 392.2 L353.0 389.5 L353.5 386.7 L354.0 383.8 L354.5 381.0 L355.0 378.1 L355.5 375.3 L356.0 372.4 L356.5 369.6 L357.0 366.7 L357.5 363.9 L358.0 361.0 L358.5 358.2 L359.0 355.3 L359.5 352.5 L360.0 349.6 L360.5 346.8 L361.0 343.9 L361.5 341.1 L362.0 338.2 L362.5 335.4 L363.0 332.5 L363.5 329.7 L364.0 326.8 L364.5 324.0 L365.0 321.1 L365.5 318.3 L366.0 315.4 L366.5 312.6 L367.0 309.7 L367.5 306.9 L368.0 304.0 L368.5 301.2 L369.0 298.3 L369.5 295.5 L370.0 292.6 L370.5 289.8 L371.0 286.9 L371.5 284.1 L372.0 281.2 L372.5 278.4 L373.0 275.5 L373.5 272.7 L374.0 269.8 L374.5 267.0 L375.0 264.1 L375.5 261.3 L376.0 258.4 L376.5 255.6 L377.0 252.7 L377.5 249.9 L378.0 247.0 L378.5 244.2 L379.0 241.3 L379.5 238.5 L380.0 235.6 L380.5 232.8 L381.0 229.9 L381.5 227.1 L382.0 224.2 L382.5 221.4 L383.0 218.5 L383.5 215.7 L384.0 212.8 L384.5 210.0 L385.0 207.1 L385.5 204.2 L386.0 201.4 L386.5 198.5 L387.0 195.7 L387.5 192.8 L388.0 190.0 L388.5 187.1 L389.0 184.3 L389.5 181.4 L390.0 178.6 L390.5 175.7 L391.0 172.9 L391.5 170.0 L392.0 167.2 L392.5 164.3 L393.0 161.5 L393.5 158.6 L394.0 159.5 L394.5 162.8 L395.0 166.2 L395.5 169.5 L396.0 172.8 L396.5 176.2 L397.0 179.5 L397.5 182.8 L398.0 186.2 L398.5 189.5 L399.0 192.8 L399.5 196.2 L400.0 199.5 L400.5 202.8 L401.0 206.2 L401.5 209.5 L402.0 212.8 L402.5 216.1 L403.0 219.5 L403.5 222.8 L404.0 226.1 L404.5 229.5 L405.0 232.8 L405.5 236.1 L406.0 239.5 L406.5 242.8 L407.0 246.1 L407.5 249.5 L408.0 252.8 L408.5 256.1 L409.0 259.5 L409.5 262.8 L410.0 266.1 L410.5 269.5 L411.0 272.8 L411.5 276.1 L412.0 279.5 L412.5 282.8 L413.0 286.1 L413.5 289.5 L414.0 292.8 L414.5 296.1 L415.0 299.5 L415.5 302.8 L416.0 306.1 L416.5 309.5 L417.0 312.8 L417.5 316.1 L418.0 319.4 L418.5 322.8 L419.0 326.1 L419.5 329.4 L420.0 332.8 L420.5 336.1 L421.0 339.4 L421.5 342.8 L422.0 346.1 L422.5 349.4 L423.0 352.8 L423.5 356.1 L424.0 359.4 L424.5 362.8 L425.0 366.1 L425.5 369.4 L426.0 372.8 L426.5 376.1 L427.0 379.4 L427.5 382.8 L428.0 386.1 L428.5 389.4 L429.0 392.8 L429.5 396.1 L430.0 399.4 L430.5 402.8 L431.0 406.1 L431.5 409.4 L432.0 412.8 L432.5 416.1 L433.0 419.4 L433.5 422.8 L434.0 426.1 L434.5 429.3 L435.0 432.5 L435.5 435.6 L436.0 438.6 L436.5 441.5 L437.0 444.3 L437.5 447.0 L438.0 449.6 L438.5 452.2 L439.0 454.6 L439.5 456.9 L440.0 459.2 L440.5 461.3 L441.0 463.4 L441.5 465.4 L442.0 467.3 L442.5 469.0 L443.0 470.7 L443.5 472.3 L444.0 473.8 L444.5 475.3 L445.0 476.6 L445.5 477.8 L446.0 479.0 L446.5 480.0 L447.0 481.0 L447.5 481.8 L448.0 482.6 L448.5 483.3 L449.0 483.8 L449.5 484.3 L450.0 484.7 L450.5 485.0 L451.0 485.3 L451.5 485.4 L452.0 485.4 L452.5 485.3 L453.0 485.2 L453.5 484.9 L454.0 484.6 L454.5 484.1 L455.0 483.6 L455.5 483.0 L456.0 482.3 L456.5 481.5 L457.0 480.6 L457.5 479.6 L458.0 478.5 L458.5 477.3 L459.0 476.0 L459.5 474.6 L460.0 473.2 L460.5 471.6 L461.0 470.0 L461.5 468.2 L462.0 466.4 L462.5 464.5 L463.0 462.5 L463.5 460.3 L464.0 458.1 L464.5 455.8 L465.0 453.4 L465.5 450.9 L466.0 448.4 L466.5 445.7 L467.0 442.9 L467.5 440.1 L468.0 437.1 L468.5 434.1 L469.0 430.9 L469.5 427.7 L470.0 424.4 L470.5 421.0 L471.0 417.7 L471.5 414.3 L472.0 411.0 L472.5 407.6 L473.0 404.3 L473.5 400.9 L474.0 397.6 L474.5 394.2 L475.0 390.9 L475.5 387.5 L476.0 384.1 L476.5 380.8 L477.0 377.4 L477.5 374.1 L478.0 370.7 L478.5 367.4 L479.0 364.0 L479.5 360.7 L480.0 357.3 L480.5 354.0 L481.0 350.6 L481.5 347.3 L482.0 343.9 L482.5 340.6 L483.0 337.2 L483.5 333.9 L484.0 330.5 L484.5 327.2 L485.0 323.8 L485.5 320.4 L486.0 317.1 L486.5 313.7 L487.0 310.4 L487.5 307.0 L488.0 303.7 L488.5 300.3 L489.0 297.0 L489.5 293.6 L490.0 290.3 L490.5 286.9 L491.0 283.6 L491.5 280.2 L492.0 276.9 L492.5 273.5 L493.0 270.2 L493.5 266.8 L494.0 263.5 L494.5 260.1 L495.0 256.7 L495.5 253.4 L496.0 250.0 L496.5 246.7 L497.0 243.3 L497.5 240.0 L498.0 236.6 L498.5 233.3 L499.0 229.9 L499.5 226.6 L500.0 223.2 L500.5 219.9 L501.0 216.5 L501.5 213.2 L502.0 209.8 L502.5 206.5 L503.0 203.1 L503.5 199.8 L504.0 196.4 L504.5 193.0 L505.0 189.7 L505.5 186.3 L506.0 183.0 L506.5 179.6 L507.0 176.3 L507.5 172.9 L508.0 169.6 L508.5 166.2 L509.0 162.9 L509.5 159.5 L510.0 156.2 L510.5 157.8 L511.0 160.7 L511.5 163.5 L512.0 166.4 L512.5 169.3 L513.0 172.2 L513.5 175.0 L514.0 177.9 L514.5 180.8 L515.0 183.6 L515.5 186.5 L516.0 189.4 L516.5 192.2 L517.0 195.1 L517.5 198.0 L518.0 200.9 L518.5 203.7 L519.0 206.6 L519.5 209.5 L520.0 212.3 L520.5 215.2 L521.0 218.1 L521.5 221.0 L522.0 223.8 L522.5 226.7 L523.0 229.6 L523.5 232.4 L524.0 235.3 L524.5 238.2 L525.0 241.1 L525.5 243.9 L526.0 246.8 L526.5 249.7 L527.0 252.5 L527.5 255.4 L528.0 258.3 L528.5 261.1 L529.0 264.0 L529.5 266.9 L530.0 269.8 L530.5 272.6 L531.0 275.5 L531.5 278.4 L532.0 281.2 L532.5 284.1 L533.0 287.0 L533.5 289.9 L534.0 292.7 L534.5 295.6 L535.0 298.5 L535.5 301.3 L536.0 304.2 L536.5 307.1 L537.0 310.0 L537.5 312.8 L538.0 315.7 L538.5 318.6 L539.0 321.4 L539.5 324.3 L540.0 327.2 L540.5 330.1 L541.0 332.9 L541.5 335.8 L542.0 338.7 L542.5 341.5 L543.0 344.4 L543.5 347.3 L544.0 350.1 L544.5 353.0 L545.0 355.9 L545.5 358.8 L546.0 361.6 L546.5 364.5 L547.0 367.4 L547.5 370.2 L548.0 373.1 L548.5 376.0 L549.0 378.9 L549.5 381.7 L550.0 384.6 L550.5 387.5 L551.0 390.3 L551.5 393.0 L552.0 395.6 L552.5 398.2 L553.0 400.7 L553.5 403.1 L554.0 405.4 L554.5 407.6 L555.0 409.8 L555.5 411.9 L556.0 413.9 L556.5 415.8 L557.0 417.6 L557.5 419.4 L558.0 421.1 L558.5 422.7 L559.0 424.2 L559.5 425.6 L560.0 427.0 L560.5 428.3 L561.0 429.5 L561.5 430.6 L562.0 431.7 L562.5 432.6 L563.0 433.5 L563.5 434.3 L564.0 435.1 L564.5 435.7 L565.0 436.3 L565.5 436.7 L566.0 437.2 L566.5 437.5 L567.0 437.7 L567.5 437.9 L568.0 438.0 L568.5 438.0 L569.0 437.9 L569.5 437.8 L570.0 437.5 L570.5 437.2 L571.0 436.8 L571.5 436.4 L572.0 435.8 L572.5 435.2 L573.0 434.5 L573.5 433.7 L574.0 432.9 L574.5 431.9 L575.0 430.9 L575.5 429.8 L576.0 428.6 L576.5 427.4 L577.0 426.0 L577.5 424.6 L578.0 423.1 L578.5 421.5 L579.0 419.9 L579.5 418.1 L580.0 416.3 L580.5 414.4 L581.0 412.5 L581.5 410.4 L582.0 408.3 L582.5 406.1 L583.0 403.8 L583.5 401.4 L584.0 399.0 L584.5 396.4 L585.0 393.8 L585.5 391.1 L586.0 388.4 L586.5 385.5 L587.0 382.7 L587.5 379.8 L588.0 377.0 L588.5 374.1 L589.0 371.3 L589.5 368.4 L590.0 365.6 L590.5 362.7 L591.0 359.9 L591.5 357.0 L592.0 354.2 L592.5 351.3 L593.0 348.5 L593.5 345.6 L594.0 342.8 L594.5 339.9 L595.0 337.1 L595.5 334.2 L596.0 331.4 L596.5 328.5 L597.0 325.7 L597.5 322.8 L598.0 320.0 L598.5 317.1 L599.0 314.3 L599.5 311.4 L600.0 308.6 L600.5 305.7 L601.0 302.9 L601.5 300.0 L602.0 297.2 L602.5 294.3 L603.0 291.5 L603.5 288.6 L604.0 285.8 L604.5 282.9 L605.0 280.1 L605.5 277.2 L606.0 274.4 L606.5 271.5 L607.0 268.7 L607.5 265.8 L608.0 263.0 L608.5 260.1 L609.0 257.3 L609.5 254.4 L610.0 251.6 L610.5 248.7 L611.0 245.9 L611.5 243.0 L612.0 240.2 L612.5 237.3 L613.0 234.5 L613.5 231.6 L614.0 228.8 L614.5 225.9 L615.0 223.1 L615.5 220.2 L616.0 217.4 L616.5 214.5 L617.0 211.7 L617.5 208.8 L618.0 206.0 L618.5 203.1 L619.0 200.3 L619.5 197.4 L620.0 194.6 L620.5 191.7 L621.0 188.9 L621.5 186.0 L622.0 183.2 L622.5 180.3 L623.0 177.5 L623.5 174.6 L624.0 171.8 L624.5 168.9 L625.0 166.1 L625.5 163.2 L626.0 160.4 L626.5 157.5 L627.0 160.8 L627.5 164.2 L628.0 167.5 L628.5 170.8 L629.0 174.2 L629.5 177.5 L630.0 180.8 L630.5 184.2 L631.0 187.5 L631.5 190.8 L632.0 194.2 L632.5 197.5 L633.0 200.8 L633.5 204.2 L634.0 207.5 L634.5 210.8 L635.0 214.1 L635.5 217.5 L636.0 220.8 L636.5 224.1 L637.0 227.5 L637.5 230.8 L638.0 234.1 L638.5 237.5 L639.0 240.8 L639.5 244.1 L640.0 247.5 L640.5 250.8 L641.0 254.1 L641.5 257.5 L642.0 260.8 L642.5 264.1 L643.0 267.5 L643.5 270.8 L644.0 274.1 L644.5 277.5 L645.0 280.8 L645.5 284.1 L646.0 287.5 L646.5 290.8 L647.0 294.1 L647.5 297.5 L648.0 300.8 L648.5 304.1 L649.0 307.5 L649.5 310.8 L650.0 314.1 L650.5 317.5 L651.0 320.8 L651.5 324.1 L652.0 327.4 L652.5 330.8 L653.0 334.1 L653.5 337.4 L654.0 340.8 L654.5 344.1 L655.0 347.4 L655.5 350.8 L656.0 354.1 L656.5 357.4 L657.0 360.8 L657.5 364.1 L658.0 367.4 L658.5 370.8 L659.0 374.1 L659.5 377.4 L660.0 380.8 L660.5 384.1 L661.0 387.4 L661.5 390.8 L662.0 394.1 L662.5 397.4 L663.0 400.8 L663.5 404.1 L664.0 407.4 L664.5 410.8 L665.0 414.1 L665.5 417.4 L666.0 420.8 L666.5 424.1 L667.0 427.4 L667.5 430.6 L668.0 433.8 L668.5 436.8 L669.0 439.8 L669.5 442.6 L670.0 445.4 L670.5 448.1 L671.0 450.7 L671.5 453.1 L672.0 455.5 L672.5 457.8 L673.0 460.1 L673.5 462.2 L674.0 464.2 L674.5 466.1 L675.0 468.0 L675.5 469.7 L676.0 471.4 L676.5 473.0 L677.0 474.4 L677.5 475.8 L678.0 477.1 L678.5 478.3 L679.0 479.4 L679.5 480.4 L680.0 481.3 L680.5 482.1 L681.0 482.9 L681.5 483.5 L682.0 484.1 L682.5 484.5 L683.0 484.9 L683.5 485.1 L684.0 485.3 L684.5 485.4 L685.0 485.4 L685.5 485.3 L686.0 485.1 L686.5 484.8 L687.0 484.4 L687.5 483.9 L688.0 483.4 L688.5 482.7 L689.0 482.0 L689.5 481.1 L690.0 480.2 L690.5 479.1 L691.0 478.0 L691.5 476.8 L692.0 475.5 L692.5 474.1 L693.0 472.6 L693.5 471.0 L694.0 469.3 L694.5 467.5 L695.0 465.6 L695.5 463.7 L696.0 461.6 L696.5 459.5 L697.0 457.2 L697.5 454.9 L698.0 452.5 L698.5 449.9 L699.0 447.3 L699.5 444.6 L700.0 441.8 L700.5 438.9 L701.0 435.9 L701.5 432.8 L702.0 429.7 L702.5 426.4 L703.0 423.0 L703.5 419.7 L704.0 416.3 L704.5 413.0 L705.0 409.6 L705.5 406.3 L706.0 402.9 L706.5 399.6 L707.0 396.2 L707.5 392.9 L708.0 389.5 L708.5 386.2 L709.0 382.8 L709.5 379.5 L710.0 376.1 L710.5 372.7 L711.0 369.4 L711.5 366.0 L712.0 362.7 L712.5 359.3 L713.0 356.0 L713.5 352.6 L714.0 349.3 L714.5 345.9 L715.0 342.6 L715.5 339.2 L716.0 335.9 L716.5 332.5 L717.0 329.2 L717.5 325.8 L718.0 322.5 L718.5 319.1 L719.0 315.8 L719.5 312.4 L720.0 309.1 L720.5 305.7 L721.0 302.3 L721.5 299.0 L722.0 295.6 L722.5 292.3 L723.0 288.9 L723.5 285.6 L724.0 282.2 L724.5 278.9 L725.0 275.5 L725.5 272.2 L726.0 268.8 L726.5 265.5 L727.0 262.1 L727.5 258.8 L728.0 255.4 L728.5 252.1 L729.0 248.7 L729.5 245.4 L730.0 242.0 L730.5 238.6 L731.0 235.3 L731.5 231.9 L732.0 228.6 L732.5 225.2 L733.0 221.9 L733.5 218.5 L734.0 215.2 L734.5 211.8 L735.0 208.5 L735.5 205.1 L736.0 201.8 L736.5 198.4 L737.0 195.1 L737.5 191.7 L738.0 188.4 L738.5 185.0 L739.0 181.7 L739.5 178.3 L740.0 174.9 L740.5 171.6 L741.0 168.2 L741.5 164.9 L742.0 161.5 L742.5 158.2 L743.0 156.1 L743.5 158.9 L744.0 161.8 L744.5 164.7 L745.0 167.6 L745.5 170.4 L746.0 173.3 L746.5 176.2 L747.0 179.0 L747.5 181.9 L748.0 184.8 L748.5 187.7 L749.0 190.5 L749.5 193.4 L750.0 196.3 L750.5 199.1 L751.0 202.0 L751.5 204.9 L752.0 207.8 L752.5 210.6 L753.0 213.5 L753.5 216.4 L754.0 219.2 L754.5 222.1 L755.0 225.0 L755.5 227.8 L756.0 230.7 L756.5 233.6 L757.0 236.5 L757.5 239.3 L758.0 242.2 L758.5 245.1 L759.0 247.9 L759.5 250.8 L760.0 253.7 L760.5 256.6 L761.0 259.4 L761.5 262.3 L762.0 265.2 L762.5 268.0 L763.0 270.9 L763.5 273.8 L764.0 276.7 L764.5 279.5 L765.0 282.4 L765.5 285.3 L766.0 288.1 L766.5 291.0 L767.0 293.9 L767.5 296.7 L768.0 299.6 L768.5 302.5 L769.0 305.4 L769.5 308.2 L770.0 311.1 L770.5 314.0 L771.0 316.8 L771.5 319.7 L772.0 322.6 L772.5 325.5 L773.0 328.3 L773.5 331.2 L774.0 334.1 L774.5 336.9 L775.0 339.8 L775.5 342.7 L776.0 345.6 L776.5 348.4 L777.0 351.3 L777.5 354.2 L778.0 357.0 L778.5 359.9 L779.0 362.8 L779.5 365.7 L780.0 368.5 L780.5 371.4 L781.0 374.3 L781.5 377.1 L782.0 380.0 L782.5 382.9 L783.0 385.7 L783.5 388.6 L784.0 391.4 L784.5 394.0 L785.0 396.7 L785.5 399.2 L786.0 401.6 L786.5 404.0 L787.0 406.3 L787.5 408.5 L788.0 410.6 L788.5 412.7 L789.0 414.6 L789.5 416.5 L790.0 418.3 L790.5 420.1 L791.0 421.7 L791.5 423.3 L792.0 424.8 L792.5 426.2 L793.0 427.5 L793.5 428.8 L794.0 430.0 L794.5 431.1 L795.0 432.1 L795.5 433.0 L796.0 433.9 L796.5 434.6 L797.0 435.3 L797.5 435.9 L798.0 436.5 L798.5 436.9 L799.0 437.3 L799.5 437.6 L800.0 437.8 L800.5 437.9 L801.0 438.0 L801.5 438.0 L802.0 437.9 L802.5 437.7 L803.0 437.4 L803.5 437.1 L804.0 436.7 L804.5 436.2 L805.0 435.6 L805.5 434.9 L806.0 434.2 L806.5 433.4 L807.0 432.5 L807.5 431.5 L808.0 430.5 L808.5 429.3 L809.0 428.1 L809.5 426.8 L810.0 425.5 L810.5 424.0 L811.0 422.5 L811.5 420.9 L812.0 419.2 L812.5 417.4 L813.0 415.6 L813.5 413.6 L814.0 411.6 L814.5 409.6 L815.0 407.4 L815.5 405.2 L816.0 402.8 L816.5 400.4 L817.0 398.0 L817.5 395.4 L818.0 392.8 L818.5 390.1 L819.0 387.3 L819.5 384.4 L820.0 381.6 L820.5 378.7 L821.0 375.9 L821.5 373.0 L822.0 370.2 L822.5 367.3 L823.0 364.5 L823.5 361.6 L824.0 358.8 L824.5 355.9 L825.0 353.1 L825.5 350.2 L826.0 347.3 L826.5 344.5 L827.0 341.6 L827.5 338.8 L828.0 335.9 L828.5 333.1 L829.0 330.2 L829.5 327.4 L830.0 324.5 L830.5 321.7 L831.0 318.8 L831.5 316.0 L832.0 313.1 L832.5 310.3 L833.0 307.4 L833.5 304.6 L834.0 301.7 L834.5 298.9 L835.0 296.0 L835.5 293.2 L836.0 290.3 L836.5 287.5 L837.0 284.6 L837.5 281.8 L838.0 278.9 L838.5 276.1 L839.0 273.2 L839.5 270.4 L840.0 267.5 L840.5 264.7 L841.0 261.8 L841.5 259.0 L842.0 256.1 L842.5 253.3 L843.0 250.4 L843.5 247.6 L844.0 244.7 L844.5 241.9 L845.0 239.0 L845.5 236.2 L846.0 233.3 L846.5 230.5 L847.0 227.6 L847.5 224.8 L848.0 221.9 L848.5 219.1 L849.0 216.2 L849.5 213.4 L850.0 210.5 L850.5 207.7 L851.0 204.8 L851.5 202.0 L852.0 199.1 L852.5 196.3 L853.0 193.4 L853.5 190.6 L854.0 187.7 L854.5 184.9 L855.0 182.0 L855.5 179.2 L856.0 176.3 L856.5 173.5 L857.0 170.6 L857.5 167.8 L858.0 164.9 L858.5 162.1 L859.0 159.2 L859.5 158.8 L860.0 162.2 L860.5 165.5 L861.0 168.8 L861.5 172.2 L862.0 175.5 L862.5 178.8 L863.0 182.2 L863.5 185.5 L864.0 188.8 L864.5 192.2 L865.0 195.5 L865.5 198.8 L866.0 202.2 L866.5 205.5 L867.0 208.8 L867.5 212.1 L868.0 215.5 L868.5 218.8 L869.0 222.1 L869.5 225.5 L870.0 228.8 L870.5 232.1 L871.0 235.5 L871.5 238.8 L872.0 242.1 L872.5 245.5 L873.0 248.8 L873.5 252.1 L874.0 255.5 L874.5 258.8 L875.0 262.1 L875.5 265.5 L876.0 268.8 L876.5 272.1 L877.0 275.5 L877.5 278.8 L878.0 282.1 L878.5 285.5 L879.0 288.8 L879.5 292.1 L880.0 295.5 L880.5 298.8 L881.0 302.1 L881.5 305.5 L882.0 308.8 L882.5 312.1 L883.0 315.5 L883.5 318.8 L884.0 322.1 L884.5 325.4 L885.0 328.8 L885.5 332.1 L886.0 335.4 L886.5 338.8 L887.0 342.1 L887.5 345.4 L888.0 348.8 L888.5 352.1 L889.0 355.4 L889.5 358.8 L890.0 362.1 L890.5 365.4 L891.0 368.8 L891.5 372.1 L892.0 375.4 L892.5 378.8 L893.0 382.1 L893.5 385.4 L894.0 388.8 L894.5 392.1 L895.0 395.4 L895.5 398.8 L896.0 402.1 L896.5 405.4 L897.0 408.8 L897.5 412.1 L898.0 415.4 L898.5 418.8 L899.0 422.1 L899.5 425.4 L900.0 428.7 L900.5 431.9 L901.0 435.0 L901.5 438.0 L902.0 440.9 L902.5 443.7 L903.0 446.5 L903.5 449.1 L904.0 451.7 L904.5 454.1 L905.0 456.5 L905.5 458.7 L906.0 460.9 L906.5 463.0 L907.0 465.0 L907.5 466.9 L908.0 468.7 L908.5 470.4 L909.0 472.0 L909.5 473.6 L910.0 475.0 L910.5 476.3 L911.0 477.6 L911.5 478.7 L912.0 479.8 L912.5 480.8 L913.0 481.7 L913.5 482.4 L914.0 483.1 L914.5 483.7 L915.0 484.2 L915.5 484.7 L916.0 485.0 L916.5 485.2 L917.0 485.4 L917.5 485.4 L918.0 485.4 L918.5 485.2 L919.0 485.0 L919.5 484.7 L920.0 484.2 L920.5 483.7 L921.0 483.1 L921.5 482.4 L922.0 481.6 L922.5 480.7 L923.0 479.8 L923.5 478.7 L924.0 477.5 L924.5 476.3 L925.0 474.9 L925.5 473.5 L926.0 471.9 L926.5 470.3 L927.0 468.6 L927.5 466.8 L928.0 464.9 L928.5 462.9 L929.0 460.8 L929.5 458.6 L930.0 456.3 L930.5 453.9 L931.0 451.5 L931.5 448.9 L932.0 446.2 L932.5 443.5 L933.0 440.7 L933.5 437.7 L934.0 434.7 L934.5 431.6 L935.0 428.4 L935.5 425.1 L936.0 421.7 L936.5 418.3 L937.0 415.0 L937.5 411.6 L938.0 408.3 L938.5 404.9 L939.0 401.6 L939.5 398.2 L940.0 394.9 L940.5 391.5 L941.0 388.2 L941.5 384.8 L942.0 381.5 L942.5 378.1 L943.0 374.8 L943.5 371.4 L944.0 368.1 L944.5 364.7 L945.0 361.4 L945.5 358.0 L946.0 354.6 L946.5 351.3 L947.0 347.9 L947.5 344.6 L948.0 341.2 L948.5 337.9 L949.0 334.5 L949.5 331.2 L950.0 327.8 L950.5 324.5 L951.0 321.1 L951.5 317.8 L952.0 314.4 L952.5 311.1 L953.0 307.7 L953.5 304.4 L954.0 301.0 L954.5 297.7 L955.0 294.3 L955.5 290.9 L956.0 287.6 L956.5 284.2 L957.0 280.9 L957.5 277.5 L958.0 274.2 L958.5 270.8 L959.0 267.5 L959.5 264.1 L960.0 260.8 L960.5 257.4 L961.0 254.1 L961.5 250.7 L962.0 247.4 L962.5 244.0 L963.0 240.7 L963.5 237.3 L964.0 234.0 L964.5 230.6 L965.0 227.2 L965.5 223.9 L966.0 220.5 L966.5 217.2 L967.0 213.8 L967.5 210.5 L968.0 207.1 L968.5 203.8 L969.0 200.4 L969.5 197.1 L970.0 193.7 L970.5 190.4 L971.0 187.0 L971.5 183.7 L972.0 180.3 L972.5 177.0 L973.0 173.6 L973.5 170.3 L974.0 166.9 L974.5 163.5 L975.0 160.2 L975.5 156.8 L976.0 157.2 L976.5 160.1 L977.0 163.0 L977.5 165.8 L978.0 168.7 L978.5 171.6 L979.0 174.4 L979.5 177.3 L980.0 180.2 L980.5 183.1 L981.0 185.9 L981.5 188.8 L982.0 191.7 L982.5 194.5 L983.0 197.4 L983.5 200.3 L984.0 203.2 L984.5 206.0 L985.0 208.9 L985.5 211.8 L986.0 214.6 L986.5 217.5 L987.0 220.4 L987.5 223.3 L988.0 226.1 L988.5 229.0 L989.0 231.9 L989.5 234.7 L990.0 237.6 L990.5 240.5 L991.0 243.4 L991.5 246.2 L992.0 249.1 L992.5 252.0 L993.0 254.8 L993.5 257.7 L994.0 260.6 L994.5 263.4 L995.0 266.3 L995.5 269.2 L996.0 272.1 L996.5 274.9 L997.0 277.8 L997.5 280.7 L998.0 283.5 L998.5 286.4 L999.0 289.3 L999.5 292.2 L1000.0 295.0 L1000.5 297.9 L1001.0 300.8 L1001.5 303.6 L1002.0 306.5 L1002.5 309.4 L1003.0 312.3 L1003.5 315.1 L1004.0 318.0 L1004.5 320.9 L1005.0 323.7 L1005.5 326.6 L1006.0 329.5 L1006.5 332.3 L1007.0 335.2 L1007.5 338.1 L1008.0 341.0 L1008.5 343.8 L1009.0 346.7 L1009.5 349.6 L1010.0 352.4 L1010.5 355.3 L1011.0 358.2 L1011.5 361.1 L1012.0 363.9 L1012.5 366.8 L1013.0 369.7 L1013.5 372.5 L1014.0 375.4 L1014.5 378.3 L1015.0 381.2 L1015.5 384.0 L1016.0 386.9 L1016.5 389.7 L1017.0 392.4 L1017.5 395.1 L1018.0 397.7 L1018.5 400.2 L1019.0 402.6 L1019.5 404.9 L1020.0 407.2 L1020.5 409.4 L1021.0 411.5 L1021.5 413.5 L1022.0 415.4 L1022.5 417.3 L1023.0 419.0 L1023.5 420.7 L1024.0 422.4 L1024.5 423.9 L1025.0 425.4 L1025.5 426.7 L1026.0 428.0 L1026.5 429.3 L1027.0 430.4 L1027.5 431.5 L1028.0 432.4 L1028.5 433.3 L1029.0 434.2 L1029.5 434.9 L1030.0 435.6 L1030.5 436.2 L1031.0 436.7 L1031.5 437.1 L1032.0 437.4 L1032.5 437.7 L1033.0 437.9 L1033.5 438.0 L1034.0 438.0 L1034.5 437.9 L1035.0 437.8 L1035.5 437.6 L1036.0 437.3 L1036.5 436.9 L1037.0 436.5 L1037.5 435.9 L1038.0 435.3 L1038.5 434.6 L1039.0 433.9 L1039.5 433.0 L1040.0 432.1 L1040.5 431.1 L1041.0 430.0 L1041.5 428.9 L1042.0 427.6 L1042.5 426.3 L1043.0 424.9 L1043.5 423.4 L1044.0 421.8 L1044.5 420.2 L1045.0 418.5 L1045.5 416.7 L1046.0 414.8 L1046.5 412.9 L1047.0 410.8 L1047.5 408.7 L1048.0 406.5 L1048.5 404.2 L1049.0 401.9 L1049.5 399.5 L1050.0 396.9 L1050.5 394.4 L1051.0 391.7 L1051.5 388.9 L1052.0 386.1 L1052.5 383.3 L1053.0 380.4 L1053.5 377.6 L1054.0 374.7 L1054.5 371.9 L1055.0 369.0 L1055.5 366.2 L1056.0 363.3 L1056.5 360.5 L1057.0 357.6 L1057.5 354.8 L1058.0 351.9 L1058.5 349.1 L1059.0 346.2 L1059.5 343.4 L1060.0 340.5 L1060.5 337.7 L1061.0 334.8 L1061.5 332.0 L1062.0 329.1 L1062.5 326.3 L1063.0 323.4 L1063.5 320.6 L1064.0 317.7 L1064.5 314.9 L1065.0 312.0 L1065.5 309.2 L1066.0 306.3 L1066.5 303.5 L1067.0 300.6 L1067.5 297.7 L1068.0 294.9 L1068.5 292.0 L1069.0 289.2 L1069.5 286.3 L1070.0 283.5 L1070.5 280.6 L1071.0 277.8 L1071.5 274.9 L1072.0 272.1 L1072.5 269.2 L1073.0 266.4 L1073.5 263.5 L1074.0 260.7 L1074.5 257.8 L1075.0 255.0 L1075.5 252.1 L1076.0 249.3 L1076.5 246.4 L1077.0 243.6 L1077.5 240.7 L1078.0 237.9 L1078.5 235.0 L1079.0 232.2 L1079.5 229.3 L1080.0 226.5 L1080.5 223.6 L1081.0 220.8 L1081.5 217.9 L1082.0 215.1 L1082.5 212.2 L1083.0 209.4 L1083.5 206.5 L1084.0 203.7 L1084.5 200.8 L1085.0 198.0 L1085.5 195.1 L1086.0 192.3 L1086.5 189.4 L1087.0 186.6 L1087.5 183.7 L1088.0 180.9 L1088.5 178.0 L1089.0 175.2 L1089.5 172.3 L1090.0 169.5 L1090.5 166.6 L1091.0 163.8 L1091.5 160.9 L1092.0 158.1 L1092.5 160.2 L1093.0 163.5 L1093.5 166.8 L1094.0 170.2 L1094.5 173.5 L1095.0 176.8 L1095.5 180.2 L1096.0 183.5 L1096.5 186.8 L1097.0 190.2 L1097.5 193.5 L1098.0 196.8 L1098.5 200.2 L1099.0 203.5 L1099.5 206.8 L1100.0 210.2 L1100.5 213.5 L1101.0 216.8 L1101.5 220.1 L1102.0 223.5 L1102.5 226.8 L1103.0 230.1 L1103.5 233.5 L1104.0 236.8 L1104.5 240.1 L1105.0 243.5 L1105.5 246.8 L1106.0 250.1 L1106.5 253.5 L1107.0 256.8 L1107.5 260.1 L1108.0 263.5 L1108.5 266.8 L1109.0 270.1 L1109.5 273.5 L1110.0 276.8 L1110.5 280.1 L1111.0 283.5 L1111.5 286.8 L1112.0 290.1 L1112.5 293.5 L1113.0 296.8 L1113.5 300.1 L1114.0 303.5 L1114.5 306.8 L1115.0 310.1 L1115.5 313.5 L1116.0 316.8 L1116.5 320.1 L1117.0 323.4 L1117.5 326.8 L1118.0 330.1 L1118.5 333.4 L1119.0 336.8 L1119.5 340.1 L1120.0 343.4 L1120.5 346.8 L1121.0 350.1 L1121.5 353.4 L1122.0 356.8 L1122.5 360.1 L1123.0 363.4 L1123.5 366.8 L1124.0 370.1 L1124.5 373.4 L1125.0 376.8 L1125.5 380.1 L1126.0 383.4 L1126.5 386.8 L1127.0 390.1 L1127.5 393.4 L1128.0 396.8 L1128.5 400.1 L1129.0 403.4 L1129.5 406.8 L1130.0 410.1 L1130.5 413.4 L1131.0 416.8 L1131.5 420.1 L1132.0 423.4 L1132.5 426.7 L1133.0 430.0 L1133.5 433.1 L1134.0 436.2 L1134.5 439.2 L1135.0 442.1 L1135.5 444.8 L1136.0 447.5 L1136.5 450.1 L1137.0 452.7 L1137.5 455.1 L1138.0 457.4 L1138.5 459.6 L1139.0 461.8 L1139.5 463.8 L1140.0 465.8 L1140.5 467.6 L1141.0 469.4 L1141.5 471.1 L1142.0 472.6 L1142.5 474.1 L1143.0 475.5 L1143.5 476.8 L1144.0 478.1 L1144.5 479.2 L1145.0 480.2 L1145.5 481.1 L1146.0 482.0 L1146.5 482.7 L1147.0 483.4 L1147.5 483.9 L1148.0 484.4 L1148.5 484.8 L1149.0 485.1 L1149.5 485.3 L1150.0 485.4 L1150.5 485.4 L1151.0 485.3 L1151.5 485.1 L1152.0 484.9 L1152.5 484.5 L1153.0 484.0 L1153.5 483.5 L1154.0 482.9 L1154.5 482.1 L1155.0 481.3 L1155.5 480.4 L1156.0 479.3 L1156.5 478.2 L1157.0 477.0 L1157.5 475.7 L1158.0 474.4 L1158.5 472.9 L1159.0 471.3 L1159.5 469.6 L1160.0 467.9 L1160.5 466.0 L1161.0 464.1 L1161.5 462.0 L1162.0 459.9 L1162.5 457.7 L1163.0 455.4 L1163.5 452.9 L1164.0 450.4 L1164.5 447.8 L1165.0 445.2 L1165.5 442.4 L1166.0 439.5 L1166.5 436.5 L1167.0 433.5 L1167.5 430.3 L1168.0 427.0 L1168.5 423.7 L1169.0 420.4 L1169.5 417.0 L1170.0 413.7 L1170.5 410.3 L1171.0 406.9 L1171.5 403.6 L1172.0 400.2 L1172.5 396.9 L1173.0 393.5 L1173.5 390.2 L1174.0 386.8 L1174.5 383.5 L1175.0 380.1 L1175.5 376.8 L1176.0 373.4 L1176.5 370.1 L1177.0 366.7 L1177.5 363.4 L1178.0 360.0 L1178.5 356.7 L1179.0 353.3 L1179.5 350.0 L1180.0 346.6 L1180.5 343.2 L1181.0 339.9 L1181.5 336.5 L1182.0 333.2 L1182.5 329.8 L1183.0 326.5 L1183.5 323.1 L1184.0 319.8 L1184.5 316.4 L1185.0 313.1 L1185.5 309.7 L1186.0 306.4 L1186.5 303.0 L1187.0 299.7 L1187.5 296.3 L1188.0 293.0 L1188.5 289.6 L1189.0 286.3 L1189.5 282.9 L1190.0 279.5 L1190.5 276.2 L1191.0 272.8 L1191.5 269.5 L1192.0 266.1 L1192.5 262.8 L1193.0 259.4 L1193.5 256.1 L1194.0 252.7 L1194.5 249.4 L1195.0 246.0 L1195.5 242.7 L1196.0 239.3 L1196.5 236.0 L1197.0 232.6 L1197.5 229.3 L1198.0 225.9 L1198.5 222.6 L1199.0 219.2 L1199.5 215.8 L1200.0 212.5 L1200.5 209.1 L1201.0 205.8 L1201.5 202.4 L1202.0 199.1 L1202.5 195.7 L1203.0 192.4 L1203.5 189.0 L1204.0 185.7 L1204.5 182.3 L1205.0 179.0 L1205.5 175.6 L1206.0 172.3 L1206.5 168.9 L1207.0 165.6 L1207.5 162.2 L1208.0 158.9 L1208.5 155.5" stroke="#ff00ff" stroke-width="1.4" fill="none" stroke-linejoin="round"/>
<g fill="#dcd8d0" font-size="13px" font-weight="bold" letter-spacing="0"><text x="36.8" y="144.9" text-anchor="end" letter-spacing="0.1">30V</text><text x="36.8" y="167.6" text-anchor="end" letter-spacing="0.1">27V</text><text x="36.8" y="190.3" text-anchor="end" letter-spacing="0.1">24V</text><text x="36.8" y="213.0" text-anchor="end" letter-spacing="0.1">21V</text><text x="36.8" y="235.7" text-anchor="end" letter-spacing="0.1">18V</text><text x="36.8" y="258.3" text-anchor="end" letter-spacing="0.1">15V</text><text x="36.8" y="281.0" text-anchor="end" letter-spacing="0.1">12V</text><text x="36.8" y="303.7" text-anchor="end" letter-spacing="0.1">9V</text><text x="36.8" y="326.4" text-anchor="end" letter-spacing="0.1">6V</text><text x="36.8" y="349.1" text-anchor="end" letter-spacing="0.1">3V</text><text x="36.8" y="371.8" text-anchor="end" letter-spacing="0.1">0V</text><text x="36.8" y="394.5" text-anchor="end" letter-spacing="0.1">-3V</text><text x="36.8" y="417.1" text-anchor="end" letter-spacing="0.1">-6V</text><text x="36.8" y="439.8" text-anchor="end" letter-spacing="0.1">-9V</text><text x="36.8" y="462.5" text-anchor="end" letter-spacing="0.1">-12V</text><text x="36.8" y="485.2" text-anchor="end" letter-spacing="0.1">-15V</text><text x="36.8" y="507.9" text-anchor="end" letter-spacing="0.1">-18V</text><text x="1218.4" y="167.7">-2.16mA</text><text x="1218.4" y="190.4">-2.17mA</text><text x="1218.4" y="213.1">-2.18mA</text><text x="1218.4" y="235.8">-2.19mA</text><text x="1218.4" y="258.4">-2.20mA</text><text x="1218.4" y="281.1">-2.21mA</text><text x="1218.4" y="303.8">-2.22mA</text><text x="1218.4" y="326.5">-2.23mA</text><text x="1218.4" y="349.2">-2.24mA</text><text x="1218.4" y="371.9">-2.25mA</text><text x="1218.4" y="394.6">-2.26mA</text><text x="1218.4" y="417.2">-2.27mA</text><text x="1218.4" y="439.9">-2.28mA</text><text x="1218.4" y="462.6">-2.29mA</text><text x="1218.4" y="485.3">-2.30mA</text><text x="1218.4" y="508.0">-2.31mA</text><text x="44.7" y="523" text-anchor="middle" letter-spacing="0.3">0.0ms</text><text x="161.1" y="523" text-anchor="middle" letter-spacing="0.3">0.5ms</text><text x="277.5" y="523" text-anchor="middle" letter-spacing="0.3">1.0ms</text><text x="393.9" y="523" text-anchor="middle" letter-spacing="0.3">1.5ms</text><text x="510.3" y="523" text-anchor="middle" letter-spacing="0.3">2.0ms</text><text x="626.7" y="523" text-anchor="middle" letter-spacing="0.3">2.5ms</text><text x="743.1" y="523" text-anchor="middle" letter-spacing="0.3">3.0ms</text><text x="859.5" y="523" text-anchor="middle" letter-spacing="0.3">3.5ms</text><text x="975.9" y="523" text-anchor="middle" letter-spacing="0.3">4.0ms</text><text x="1092.3" y="523" text-anchor="middle" letter-spacing="0.3">4.5ms</text><text x="1208.7" y="523" text-anchor="middle" letter-spacing="0.3">5.0ms</text></g>
<text x="335" y="134.5" text-anchor="middle" fill="#00ff00" font-size="12px" font-weight="bold">V(out)</text>
<text x="917" y="134.5" text-anchor="middle" fill="#ff00ff" font-size="12px" font-weight="bold">I(R17)</text>
</svg>
<div class="abs" style="left:6px;top:558px;width:1268px;height:411px;box-sizing:border-box;background:#fff;border:1px solid;border-color:#808080 #fff #fff #808080;box-shadow:inset 1px 1px 0 #404040"></div>
<svg style="left:0;top:0" width="1280" height="998" viewBox="0 0 1280 998">
<path d="M436.5 566.5 L917.5 566.5 M436.5 566.5 L436.5 611.5 M436.5 643.5 L436.5 655.5 M436.5 694.5 L436.5 700.5 M436.5 700.5 L455.5 700.5 M487.5 700.5 L526.5 700.5 M526.5 700.5 L526.5 720.5 M462.5 675.5 L558.5 675.5 M590.5 675.5 L603.5 675.5 M603.5 675.5 L603.5 931.5 M603.5 931.5 L616.5 931.5 M468.5 566.5 L468.5 572.5 M468.5 598.5 L468.5 604.5 M468.5 630.5 L468.5 643.5 M468.5 668.5 L468.5 675.5 M507.5 566.5 L507.5 572.5 M507.5 604.5 L507.5 643.5 M507.5 668.5 L507.5 675.5 M545.5 566.5 L545.5 572.5 M545.5 604.5 L545.5 611.5 M545.5 649.5 L545.5 675.5 M571.5 630.5 L628.5 630.5 M590.5 566.5 L590.5 572.5 M590.5 604.5 L590.5 630.5 M628.5 591.5 L628.5 649.5 M628.5 649.5 L680.5 649.5 M628.5 591.5 L641.5 591.5 M667.5 591.5 L718.5 591.5 M718.5 591.5 L718.5 617.5 M628.5 617.5 L660.5 617.5 M699.5 617.5 L814.5 617.5 M680.5 643.5 L680.5 681.5 M680.5 681.5 L718.5 681.5 M718.5 681.5 L718.5 854.5 M718.5 617.5 L718.5 623.5 M718.5 655.5 L718.5 668.5 M699.5 668.5 L731.5 668.5 M699.5 668.5 L699.5 758.5 M699.5 784.5 L699.5 796.5 M699.5 822.5 L699.5 828.5 M507.5 828.5 L699.5 828.5 M507.5 828.5 L507.5 848.5 M782.5 566.5 L782.5 579.5 M782.5 604.5 L782.5 617.5 M814.5 566.5 L814.5 579.5 M814.5 611.5 L814.5 675.5 M756.5 649.5 L814.5 649.5 M756.5 687.5 L756.5 720.5 M756.5 720.5 L769.5 720.5 M756.5 694.5 L788.5 694.5 M801.5 720.5 L814.5 720.5 M814.5 713.5 L814.5 828.5 M814.5 726.5 L827.5 726.5 M853.5 726.5 L872.5 726.5 M904.5 726.5 L917.5 726.5 M673.5 739.5 L724.5 739.5 M756.5 739.5 L814.5 739.5 M814.5 764.5 L853.5 764.5 M885.5 764.5 L929.5 764.5 M929.5 764.5 L929.5 777.5 M814.5 777.5 L827.5 777.5 M724.5 784.5 L763.5 784.5 M795.5 784.5 L814.5 784.5 M724.5 784.5 L724.5 841.5 M724.5 822.5 L731.5 822.5 M539.5 841.5 L724.5 841.5 M539.5 841.5 L539.5 848.5 M756.5 803.5 L814.5 803.5 M756.5 841.5 L756.5 886.5 M756.5 886.5 L769.5 886.5 M756.5 848.5 L788.5 848.5 M801.5 886.5 L814.5 886.5 M814.5 867.5 L814.5 918.5 M814.5 950.5 L814.5 956.5 M782.5 912.5 L782.5 918.5 M782.5 944.5 L782.5 956.5 M744.5 912.5 L814.5 912.5 M744.5 912.5 L744.5 963.5 M641.5 963.5 L744.5 963.5 M641.5 950.5 L641.5 963.5 M917.5 566.5 L917.5 636.5 M917.5 668.5 L917.5 880.5 M917.5 912.5 L917.5 956.5 M475.5 956.5 L917.5 956.5 M500.5 720.5 L551.5 720.5 M423.5 739.5 L475.5 739.5 M423.5 739.5 L423.5 758.5 M423.5 790.5 L423.5 803.5 M500.5 758.5 L500.5 784.5 M500.5 784.5 L571.5 784.5 M571.5 784.5 L571.5 899.5 M462.5 771.5 L468.5 771.5 M494.5 771.5 L500.5 771.5 M462.5 771.5 L462.5 803.5 M462.5 803.5 L475.5 803.5 M507.5 803.5 L551.5 803.5 M551.5 758.5 L551.5 816.5 M475.5 816.5 L551.5 816.5 M475.5 816.5 L475.5 899.5 M475.5 867.5 L481.5 867.5 M564.5 867.5 L571.5 867.5 M475.5 931.5 L475.5 956.5 M571.5 931.5 L571.5 956.5 M507.5 886.5 L507.5 892.5 M507.5 892.5 L539.5 892.5 M539.5 886.5 L539.5 892.5 M526.5 892.5 L526.5 905.5 M526.5 937.5 L526.5 956.5 M577.5 739.5 L628.5 739.5 M660.5 739.5 L673.5 739.5 M590.5 739.5 L590.5 752.5 M590.5 784.5 L590.5 790.5 M616.5 739.5 L616.5 777.5 M616.5 777.5 L673.5 777.5 M673.5 771.5 L673.5 777.5 M673.5 739.5 L673.5 745.5 M616.5 796.5 L641.5 796.5 M641.5 822.5 L641.5 841.5 M603.5 860.5 L628.5 860.5 M628.5 860.5 L628.5 867.5 M628.5 899.5 L628.5 905.5 M628.5 905.5 L654.5 905.5 M654.5 905.5 L654.5 873.5 M654.5 873.5 L692.5 873.5 M641.5 905.5 L641.5 912.5 M673.5 873.5 L673.5 880.5 M673.5 905.5 L673.5 918.5 M673.5 944.5 L673.5 956.5 M718.5 892.5 L718.5 905.5 M718.5 937.5 L718.5 956.5 M416.5 803.5 L431.5 803.5 L423.5 810.5 Z M582.5 790.5 L598.5 790.5 L590.5 797.5 Z M922.5 777.5 L937.5 777.5 L929.5 784.5 Z M827.5 772.5 L845.5 772.5 L851.5 777.5 L845.5 783.5 L827.5 783.5 Z" stroke="#0000ff" stroke-width="1" fill="none" shape-rendering="crispEdges"/>
<path d="M436.5 611.5 L436.5 614.5 L443.5 617.5 L430.5 623.5 L443.5 630.5 L430.5 636.5 L436.5 639.5 L436.5 643.5 M507.5 572.5 L507.5 575.5 L500.5 579.5 L513.5 585.5 L500.5 591.5 L513.5 598.5 L507.5 601.5 L507.5 604.5 M545.5 572.5 L545.5 575.5 L551.5 579.5 L539.5 585.5 L551.5 591.5 L539.5 598.5 L545.5 601.5 L545.5 604.5 M590.5 572.5 L590.5 575.5 L596.5 579.5 L584.5 585.5 L596.5 591.5 L584.5 598.5 L590.5 601.5 L590.5 604.5 M718.5 623.5 L718.5 627.5 L724.5 630.5 L712.5 636.5 L724.5 643.5 L712.5 649.5 L718.5 652.5 L718.5 655.5 M814.5 579.5 L814.5 582.5 L820.5 585.5 L808.5 591.5 L820.5 598.5 L808.5 604.5 L814.5 607.5 L814.5 611.5 M590.5 752.5 L590.5 755.5 L584.5 758.5 L596.5 764.5 L584.5 771.5 L596.5 777.5 L590.5 780.5 L590.5 784.5 M616.5 796.5 L616.5 800.5 L622.5 803.5 L609.5 809.5 L622.5 816.5 L609.5 822.5 L616.5 825.5 L616.5 828.5 M628.5 867.5 L628.5 870.5 L635.5 873.5 L622.5 880.5 L635.5 886.5 L622.5 892.5 L628.5 896.5 L628.5 899.5 M475.5 899.5 L475.5 902.5 L468.5 905.5 L481.5 912.5 L468.5 918.5 L481.5 924.5 L475.5 928.5 L475.5 931.5 M526.5 905.5 L526.5 908.5 L519.5 912.5 L532.5 918.5 L519.5 924.5 L532.5 931.5 L526.5 934.5 L526.5 937.5 M571.5 899.5 L571.5 902.5 L564.5 905.5 L577.5 912.5 L564.5 918.5 L577.5 924.5 L571.5 928.5 L571.5 931.5 M718.5 905.5 L718.5 908.5 L724.5 912.5 L712.5 918.5 L724.5 924.5 L712.5 931.5 L718.5 934.5 L718.5 937.5 M814.5 918.5 L814.5 921.5 L820.5 924.5 L808.5 931.5 L820.5 937.5 L808.5 944.5 L814.5 947.5 L814.5 950.5 M558.5 675.5 L561.5 675.5 L564.5 681.5 L571.5 668.5 L577.5 681.5 L584.5 668.5 L587.5 675.5 L590.5 675.5 M455.5 700.5 L459.5 700.5 L462.5 694.5 L468.5 707.5 L475.5 694.5 L481.5 707.5 L484.5 700.5 L487.5 700.5 M475.5 803.5 L478.5 803.5 L481.5 809.5 L487.5 796.5 L494.5 809.5 L500.5 796.5 L503.5 803.5 L507.5 803.5 M628.5 739.5 L632.5 739.5 L635.5 732.5 L641.5 745.5 L648.5 732.5 L654.5 745.5 L657.5 739.5 L660.5 739.5 M769.5 720.5 L772.5 720.5 L776.5 713.5 L782.5 726.5 L788.5 713.5 L795.5 726.5 L798.5 720.5 L801.5 720.5 M872.5 726.5 L875.5 726.5 L878.5 720.5 L885.5 732.5 L891.5 720.5 L897.5 732.5 L901.5 726.5 L904.5 726.5 M853.5 764.5 L856.5 764.5 L859.5 758.5 L865.5 771.5 L872.5 758.5 L878.5 771.5 L881.5 764.5 L885.5 764.5 M763.5 784.5 L766.5 784.5 L769.5 777.5 L776.5 790.5 L782.5 777.5 L788.5 790.5 L792.5 784.5 L795.5 784.5 M769.5 886.5 L772.5 886.5 L776.5 880.5 L782.5 892.5 L788.5 880.5 L795.5 892.5 L798.5 886.5 L801.5 886.5 M507.5 643.5 L507.5 654.5 M500.5 654.5 L513.5 654.5 M500.5 657.5 L513.5 657.5 M507.5 657.5 L507.5 668.5 M673.5 745.5 L673.5 756.5 M667.5 756.5 L680.5 756.5 M667.5 760.5 L680.5 760.5 M673.5 760.5 L673.5 771.5 M641.5 796.5 L641.5 808.5 M635.5 808.5 L648.5 808.5 M635.5 811.5 L648.5 811.5 M641.5 811.5 L641.5 822.5 M641.5 591.5 L652.5 591.5 M652.5 585.5 L652.5 598.5 M656.5 585.5 L656.5 598.5 M656.5 591.5 L667.5 591.5 M468.5 771.5 L479.5 771.5 M479.5 764.5 L479.5 777.5 M483.5 764.5 L483.5 777.5 M483.5 771.5 L494.5 771.5 M827.5 726.5 L838.5 726.5 M838.5 720.5 L838.5 732.5 M841.5 720.5 L841.5 732.5 M841.5 726.5 L853.5 726.5 M468.5 572.5 L468.5 580.5 M475.5 580.5 L462.5 580.5 L468.5 590.5 Z M468.5 590.5 L468.5 598.5 M475.5 590.5 L462.5 590.5 M468.5 604.5 L468.5 612.5 M462.5 612.5 L475.5 612.5 L468.5 622.5 Z M468.5 622.5 L468.5 630.5 M462.5 622.5 L475.5 622.5 M468.5 643.5 L468.5 651.5 M462.5 651.5 L475.5 651.5 L468.5 660.5 Z M468.5 660.5 L468.5 668.5 M462.5 660.5 L475.5 660.5 M673.5 880.5 L673.5 888.5 M667.5 888.5 L680.5 888.5 L673.5 897.5 Z M673.5 897.5 L673.5 905.5 M667.5 897.5 L680.5 897.5 M673.5 918.5 L673.5 926.5 M667.5 926.5 L680.5 926.5 L673.5 936.5 Z M673.5 936.5 L673.5 944.5 M668.5 932.5 L667.5 932.5 L667.5 936.5 L680.5 936.5 L680.5 939.5 L678.5 939.5 M782.5 579.5 L782.5 587.5 M788.5 587.5 L776.5 587.5 L782.5 596.5 Z M782.5 596.5 L782.5 604.5 M787.5 593.5 L788.5 593.5 L788.5 596.5 L776.5 596.5 L776.5 599.5 L777.5 599.5 M782.5 918.5 L782.5 926.5 M788.5 926.5 L776.5 926.5 L782.5 936.5 Z M782.5 936.5 L782.5 944.5 M787.5 932.5 L788.5 932.5 L788.5 936.5 L776.5 936.5 L776.5 939.5 L777.5 939.5 M699.5 784.5 L699.5 776.5 M705.5 776.5 L692.5 776.5 L699.5 766.5 Z M699.5 766.5 L699.5 758.5 M707.5 764.5 L705.5 766.5 L692.5 766.5 L690.5 768.5 M699.5 822.5 L699.5 814.5 M705.5 814.5 L692.5 814.5 L699.5 804.5 Z M699.5 804.5 L699.5 796.5 M707.5 802.5 L705.5 804.5 L692.5 804.5 L690.5 806.5 M462.5 675.5 L457.5 675.5 M457.5 684.5 L455.5 684.5 L455.5 665.5 L457.5 665.5 Z M455.5 682.5 L436.5 694.5 M455.5 667.5 L436.5 655.5 M455.5 667.5 L447.5 659.5 L444.5 664.5 Z M571.5 630.5 L566.5 630.5 M566.5 639.5 L564.5 639.5 L564.5 620.5 L566.5 620.5 Z M564.5 637.5 L545.5 649.5 M564.5 623.5 L545.5 611.5 M564.5 623.5 L556.5 614.5 L553.5 619.5 Z M475.5 739.5 L479.5 739.5 M479.5 748.5 L481.5 748.5 L481.5 729.5 L479.5 729.5 Z M481.5 746.5 L500.5 758.5 M481.5 732.5 L500.5 720.5 M481.5 732.5 L489.5 723.5 L492.5 728.5 Z M577.5 739.5 L572.5 739.5 M572.5 748.5 L571.5 748.5 L571.5 729.5 L572.5 729.5 Z M571.5 746.5 L551.5 758.5 M571.5 732.5 L551.5 720.5 M571.5 732.5 L562.5 723.5 L559.5 728.5 Z M680.5 643.5 L680.5 638.5 M670.5 638.5 L670.5 636.5 L689.5 636.5 L689.5 638.5 Z M672.5 636.5 L660.5 617.5 M687.5 636.5 L699.5 617.5 M687.5 636.5 L695.5 628.5 L690.5 625.5 Z M731.5 668.5 L736.5 668.5 M736.5 678.5 L737.5 678.5 L737.5 659.5 L736.5 659.5 Z M737.5 675.5 L756.5 687.5 M737.5 661.5 L756.5 649.5 M737.5 661.5 L745.5 652.5 L749.5 657.5 Z M731.5 822.5 L736.5 822.5 M736.5 832.5 L737.5 832.5 L737.5 812.5 L736.5 812.5 Z M737.5 829.5 L756.5 841.5 M737.5 815.5 L756.5 803.5 M737.5 815.5 L745.5 806.5 L749.5 811.5 Z M788.5 694.5 L793.5 694.5 M793.5 684.5 L795.5 684.5 L795.5 703.5 L793.5 703.5 Z M795.5 687.5 L814.5 675.5 M795.5 701.5 L814.5 713.5 M814.5 713.5 L803.5 709.5 L806.5 704.5 Z M788.5 848.5 L793.5 848.5 M793.5 838.5 L795.5 838.5 L795.5 857.5 L793.5 857.5 Z M795.5 840.5 L814.5 828.5 M795.5 855.5 L814.5 867.5 M814.5 867.5 L803.5 863.5 L806.5 858.5 Z M481.5 867.5 L486.5 867.5 M486.5 857.5 L487.5 857.5 L487.5 876.5 L486.5 876.5 Z M487.5 860.5 L507.5 848.5 M487.5 874.5 L507.5 886.5 M507.5 886.5 L495.5 882.5 L498.5 877.5 Z M564.5 867.5 L559.5 867.5 M559.5 857.5 L558.5 857.5 L558.5 876.5 L559.5 876.5 Z M558.5 860.5 L539.5 848.5 M558.5 874.5 L539.5 886.5 M539.5 886.5 L550.5 882.5 L547.5 877.5 Z M616.5 931.5 L620.5 931.5 M620.5 921.5 L622.5 921.5 L622.5 940.5 L620.5 940.5 Z M622.5 924.5 L641.5 912.5 M622.5 938.5 L641.5 950.5 M641.5 950.5 L630.5 946.5 L633.5 941.5 Z M692.5 873.5 L697.5 873.5 M697.5 864.5 L699.5 864.5 L699.5 883.5 L697.5 883.5 Z M699.5 866.5 L718.5 854.5 M699.5 880.5 L718.5 892.5 M718.5 892.5 L707.5 889.5 L710.5 884.5 Z M917.5 636.5 L917.5 647.5 M913.5 644.5 L920.5 644.5 M913.5 660.5 L920.5 660.5 M917.5 665.5 L917.5 668.5 M917.5 880.5 L917.5 891.5 M913.5 888.5 L920.5 888.5 M913.5 904.5 L920.5 904.5 M917.5 908.5 L917.5 912.5 M423.5 758.5 L423.5 769.5 M420.5 766.5 L427.5 766.5 M420.5 782.5 L427.5 782.5 M423.5 787.5 L423.5 790.5 M724.5 739.5 L728.5 739.5 M756.5 739.5 L745.5 739.5 M748.5 736.5 L748.5 742.5 M732.5 736.5 L732.5 742.5" stroke="#0000b4" stroke-width="1" fill="none" shape-rendering="crispEdges"/>
<circle cx="917.5" cy="652.5" r="12.1" fill="none" stroke="#0000b4" shape-rendering="auto" stroke-width="1"/><circle cx="917.5" cy="896.5" r="12.1" fill="none" stroke="#0000b4" shape-rendering="auto" stroke-width="1"/><circle cx="423.5" cy="774.5" r="12.1" fill="none" stroke="#0000b4" shape-rendering="auto" stroke-width="1"/><circle cx="740.5" cy="739.5" r="12.1" fill="none" stroke="#0000b4" shape-rendering="auto" stroke-width="1"/>
<g fill="#0000ff" shape-rendering="crispEdges"><rect x="466.0" y="564.0" width="5" height="5"/><rect x="505.0" y="564.0" width="5" height="5"/><rect x="543.0" y="564.0" width="5" height="5"/><rect x="588.0" y="564.0" width="5" height="5"/><rect x="780.0" y="564.0" width="5" height="5"/><rect x="812.0" y="564.0" width="5" height="5"/><rect x="466.0" y="673.0" width="5" height="5"/><rect x="505.0" y="673.0" width="5" height="5"/><rect x="543.0" y="673.0" width="5" height="5"/><rect x="588.0" y="628.0" width="5" height="5"/><rect x="626.0" y="628.0" width="5" height="5"/><rect x="626.0" y="615.0" width="5" height="5"/><rect x="678.0" y="647.0" width="5" height="5"/><rect x="716.0" y="615.0" width="5" height="5"/><rect x="780.0" y="615.0" width="5" height="5"/><rect x="812.0" y="615.0" width="5" height="5"/><rect x="716.0" y="666.0" width="5" height="5"/><rect x="812.0" y="647.0" width="5" height="5"/><rect x="754.0" y="692.0" width="5" height="5"/><rect x="812.0" y="718.0" width="5" height="5"/><rect x="812.0" y="724.0" width="5" height="5"/><rect x="812.0" y="737.0" width="5" height="5"/><rect x="812.0" y="762.0" width="5" height="5"/><rect x="812.0" y="775.0" width="5" height="5"/><rect x="812.0" y="782.0" width="5" height="5"/><rect x="812.0" y="801.0" width="5" height="5"/><rect x="915.0" y="724.0" width="5" height="5"/><rect x="915.0" y="762.0" width="5" height="5"/><rect x="524.0" y="718.0" width="5" height="5"/><rect x="588.0" y="737.0" width="5" height="5"/><rect x="614.0" y="737.0" width="5" height="5"/><rect x="671.0" y="737.0" width="5" height="5"/><rect x="498.0" y="769.0" width="5" height="5"/><rect x="549.0" y="801.0" width="5" height="5"/><rect x="473.0" y="865.0" width="5" height="5"/><rect x="569.0" y="865.0" width="5" height="5"/><rect x="524.0" y="890.0" width="5" height="5"/><rect x="524.0" y="954.0" width="5" height="5"/><rect x="569.0" y="954.0" width="5" height="5"/><rect x="671.0" y="954.0" width="5" height="5"/><rect x="716.0" y="954.0" width="5" height="5"/><rect x="780.0" y="954.0" width="5" height="5"/><rect x="812.0" y="954.0" width="5" height="5"/><rect x="614.0" y="826.0" width="5" height="5"/><rect x="639.0" y="839.0" width="5" height="5"/><rect x="601.0" y="858.0" width="5" height="5"/><rect x="639.0" y="903.0" width="5" height="5"/><rect x="671.0" y="871.0" width="5" height="5"/><rect x="722.0" y="820.0" width="5" height="5"/><rect x="754.0" y="846.0" width="5" height="5"/><rect x="812.0" y="884.0" width="5" height="5"/><rect x="780.0" y="910.0" width="5" height="5"/><rect x="812.0" y="910.0" width="5" height="5"/></g>
<g fill="#000" stroke="#000" stroke-width="0.12" font-size="9px" letter-spacing="0.15"><text x="464.0" y="575.7" text-anchor="end">D9</text><text x="464.4" y="604.6" text-anchor="end">1N914</text><text x="471.9" y="607.6" text-anchor="start">D5</text><text x="471.3" y="636.8" text-anchor="start">1N914</text><text x="471.9" y="646.7" text-anchor="start">D6</text><text x="471.3" y="675.7" text-anchor="start">1N914</text><text x="498.1" y="585.9" text-anchor="end">R23</text><text x="498.1" y="599.8" text-anchor="end">68</text><text x="553.5" y="585.9" text-anchor="start">R18</text><text x="552.8" y="599.8" text-anchor="start">68</text><text x="598.8" y="585.7" text-anchor="start">R9</text><text x="597.5" y="599.7" text-anchor="start">5K6</text><text x="445.0" y="623.7" text-anchor="start">R16</text><text x="444.0" y="638.7" text-anchor="start">330</text><text x="535.6" y="625.9" text-anchor="end">BC557B</text><text x="536.0" y="639.8" text-anchor="end">Q9</text><text x="510.2" y="649.6" text-anchor="start">C3</text><text x="510.0" y="671.8" text-anchor="start">220n</text><text x="427.1" y="670.8" text-anchor="end">BC557B</text><text x="426.4" y="684.6" text-anchor="end">Q11</text><text x="573.0" y="665.8" text-anchor="middle">R21</text><text x="573.1" y="689.5" text-anchor="middle">33K</text><text x="470.3" y="691.7" text-anchor="middle">R17</text><text x="470.0" y="715.7" text-anchor="middle">2K2</text><text x="508.8" y="735.0" text-anchor="start">BC557B</text><text x="509.5" y="749.0" text-anchor="start">Q8</text><text x="543.0" y="749.0" text-anchor="end">Q7</text><text x="413.0" y="762.0" text-anchor="end">V3</text><text x="414.5" y="796.5" text-anchor="end">SINE(0 0.7 1K)</text><text x="481.2" y="762.0" text-anchor="middle">C2</text><text x="480.0" y="786.2" text-anchor="middle">1n5</text><text x="490.2" y="793.7" text-anchor="middle">R15</text><text x="490.0" y="817.7" text-anchor="middle">22</text><text x="581.0" y="765.7" text-anchor="end">R5</text><text x="581.0" y="780.0" text-anchor="end">470</text><text x="643.1" y="729.7" text-anchor="middle">R11</text><text x="643.0" y="753.8" text-anchor="middle">10K</text><text x="669.0" y="748.8" text-anchor="end">C6</text><text x="669.0" y="771.2" text-anchor="end">27p</text><text x="695.6" y="758.8" text-anchor="end">D4</text><text x="694.4" y="787.6" text-anchor="end">BZX84C12L</text><text x="694.8" y="796.6" text-anchor="end">D3</text><text x="694.4" y="824.0" text-anchor="end">BZX84C12L</text><text x="645.0" y="824.0" text-anchor="start">820µ</text><text x="645.5" y="803.2" text-anchor="start">C5</text><text x="625.0" y="809.5" text-anchor="start">R24</text><text x="625.0" y="824.0" text-anchor="start">270</text><text x="653.4" y="582.7" text-anchor="middle">C1</text><text x="652.9" y="606.6" text-anchor="middle">470p</text><text x="726.5" y="636.5" text-anchor="start">R7</text><text x="726.0" y="651.5" text-anchor="start">56</text><text x="777.5" y="582.7" text-anchor="end">D1</text><text x="778.0" y="610.7" text-anchor="end">MBR735</text><text x="822.5" y="591.5" text-anchor="start">R6</text><text x="822.0" y="606.6" text-anchor="start">1</text><text x="764.8" y="663.7" text-anchor="start">BD138F</text><text x="764.8" y="678.2" text-anchor="start">Q2</text><text x="812.0" y="692.0" text-anchor="start">Q1</text><text x="810.6" y="705.9" text-anchor="start">2N3055</text><text x="784.8" y="710.7" text-anchor="middle">R2</text><text x="784.7" y="734.5" text-anchor="middle">15</text><text x="739.6" y="724.2" text-anchor="middle">V4</text><text x="739.2" y="771.5" text-anchor="middle">AC 1</text><text x="739.0" y="782.9" text-anchor="middle">0</text><text x="839.7" y="717.7" text-anchor="middle">C7</text><text x="839.0" y="740.7" text-anchor="middle">22n</text><text x="887.4" y="717.7" text-anchor="middle">R22</text><text x="887.0" y="740.7" text-anchor="middle">5.6</text><text x="868.3" y="755.7" text-anchor="middle">R12</text><text x="868.3" y="780.1" text-anchor="middle">4</text><text x="926.0" y="639.8" text-anchor="start">V1</text><text x="925.8" y="675.8" text-anchor="start">20</text><text x="926.0" y="884.5" text-anchor="start">V2</text><text x="925.8" y="919.5" text-anchor="start">20</text><text x="778.5" y="774.8" text-anchor="middle">R14</text><text x="778.2" y="798.2" text-anchor="middle">56</text><text x="764.8" y="817.7" text-anchor="start">BD138F</text><text x="764.8" y="832.2" text-anchor="start">Q4</text><text x="811.2" y="844.7" text-anchor="start">Q3</text><text x="810.6" y="859.6" text-anchor="start">2N3055</text><text x="784.9" y="877.7" text-anchor="middle">R3</text><text x="784.7" y="900.7" text-anchor="middle">15</text><text x="715.6" y="871.0" text-anchor="start">Q13</text><text x="715.6" y="884.7" text-anchor="start">BC547B</text><text x="726.9" y="918.7" text-anchor="start">R10</text><text x="726.0" y="932.7" text-anchor="start">680</text><text x="777.8" y="921.7" text-anchor="end">D2</text><text x="777.8" y="950.9" text-anchor="end">MBR735</text><text x="822.5" y="932.0" text-anchor="start">R8</text><text x="821.0" y="946.2" text-anchor="start">0.47</text><text x="677.0" y="883.8" text-anchor="start">D7</text><text x="676.2" y="911.8" text-anchor="start">1N914</text><text x="677.0" y="921.8" text-anchor="start">D8</text><text x="677.0" y="950.9" text-anchor="start">BAT54</text><text x="636.9" y="880.0" text-anchor="start">R19</text><text x="636.2" y="895.0" text-anchor="start">27</text><text x="638.8" y="927.9" text-anchor="start">Q12</text><text x="638.8" y="943.0" text-anchor="start">BC547B</text><text x="504.7" y="863.6" text-anchor="start">Q5</text><text x="541.0" y="863.6" text-anchor="end">Q6</text><text x="503.7" y="878.9" text-anchor="start">2N3019</text><text x="541.5" y="878.9" text-anchor="end">2N3019</text><text x="466.2" y="912.0" text-anchor="end">R4</text><text x="466.2" y="927.0" text-anchor="end">1K2</text><text x="516.2" y="919.0" text-anchor="end">R1</text><text x="517.0" y="933.2" text-anchor="end">22</text><text x="562.0" y="912.0" text-anchor="end">R13</text><text x="562.0" y="927.0" text-anchor="end">1K2</text><text x="827.0" y="781.2" text-anchor="start" font-size="10.5px">out</text><text x="827.2" y="796.8" text-anchor="start" font-size="9.3px">.tran 0 10m 5m 1µ</text><text x="825.0" y="810.0" text-anchor="start" font-size="9.15px">;ac dec 100 10 50e6</text><text x="833.8" y="823.5" text-anchor="start" font-size="9.85px">.four 1K V(out)</text><text x="822.0" y="836.4" text-anchor="start" font-size="9.6px" letter-spacing="0.38">.options plotwinsize=0</text><text transform="translate(675.0 608.0) rotate(-90)" text-anchor="start" letter-spacing="0.6">Q10</text><text transform="translate(689.5 608.0) rotate(-90)" text-anchor="start" letter-spacing="0.85">BC557B</text></g>
</svg>
</body></html>
